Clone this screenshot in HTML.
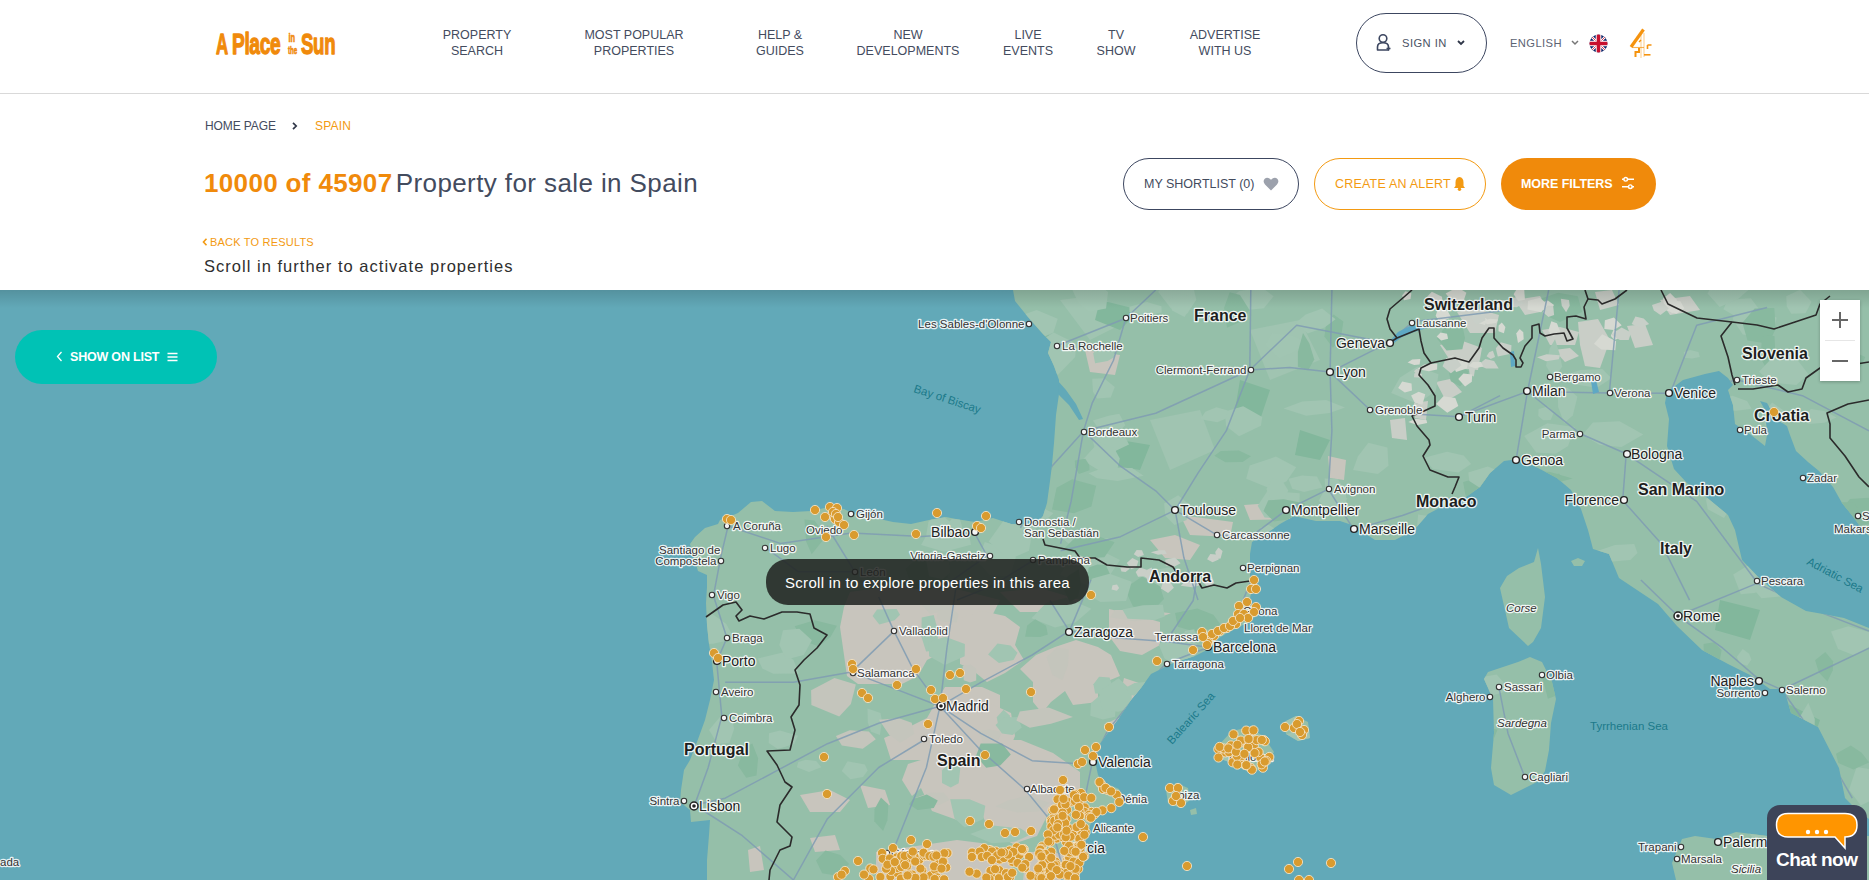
<!DOCTYPE html>
<html><head><meta charset="utf-8">
<style>
*{margin:0;padding:0;box-sizing:border-box}
html,body{width:1869px;height:880px;overflow:hidden;background:#fff;font-family:"Liberation Sans",sans-serif}
.abs{position:absolute;white-space:nowrap}
#hdr{position:absolute;left:0;top:0;width:1869px;height:94px;border-bottom:1px solid #d9d9d9;background:#fff}
.nav{position:absolute;top:27px;font-size:12.5px;line-height:16px;color:#434b5e;text-align:center;white-space:nowrap;transform:translateX(-50%);letter-spacing:0}
.btn{position:absolute;border-radius:30px;white-space:nowrap}
.bt{position:absolute;font-size:12.5px;white-space:nowrap;letter-spacing:0.2px}
#map{position:absolute;left:0;top:290px;width:1869px;height:590px;overflow:hidden;background:#62a9b8}
</style></head><body>
<div id="hdr">
  <svg class="abs" style="left:210px;top:26px" width="135" height="34" viewBox="0 0 135 34"><g fill="#f08a0b" stroke="#f08a0b" stroke-width="1.3" font-family="Liberation Sans, sans-serif" font-weight="bold" stroke-linejoin="round">
<text x="0" y="0" font-size="30" transform="translate(6,28) scale(0.56,1)">A</text>
<text x="0" y="0" font-size="30" transform="translate(22,28) scale(0.64,1)" letter-spacing="-0.6">Place</text>
<text x="0" y="0" font-size="12" transform="translate(78.5,16) scale(0.62,1)" stroke-width="0.6">in</text>
<text x="0" y="0" font-size="11" transform="translate(78,28) scale(0.56,1)" stroke-width="0.6">the</text>
<text x="0" y="0" font-size="30" transform="translate(91,28) scale(0.62,1)" letter-spacing="-0.5">Sun</text>
</g></svg>
  <div class="nav" style="left:477px">PROPERTY<br>SEARCH</div>
  <div class="nav" style="left:634px">MOST POPULAR<br>PROPERTIES</div>
  <div class="nav" style="left:780px">HELP &amp;<br>GUIDES</div>
  <div class="nav" style="left:908px">NEW<br>DEVELOPMENTS</div>
  <div class="nav" style="left:1028px">LIVE<br>EVENTS</div>
  <div class="nav" style="left:1116px">TV<br>SHOW</div>
  <div class="nav" style="left:1225px">ADVERTISE<br>WITH US</div>
  <div class="btn" style="left:1356px;top:13px;width:131px;height:60px;border:1.2px solid #3c4660"></div>
  <svg class="abs" style="left:1375px;top:33px" width="18" height="19" viewBox="0 0 18 19"><circle cx="8" cy="5.5" r="3.8" fill="none" stroke="#3c4660" stroke-width="1.6"/><path d="M2.5 17 V14 Q2.5 9.8 8 9.8 Q13.5 9.8 13.5 14 V17 Z" fill="none" stroke="#3c4660" stroke-width="1.6" stroke-linejoin="round"/><path d="M11.5 15.5 H15.5 M13.5 13.5 V17.5" stroke="#3c4660" stroke-width="1.3"/></svg>
  <div class="bt" style="left:1402px;top:37px;font-size:11.2px;letter-spacing:0.45px;color:#4a5264">SIGN IN</div>
  <svg class="abs" style="left:1457px;top:40px" width="8" height="6" viewBox="0 0 8 6"><path d="M1 1 L4 4 L7 1" fill="none" stroke="#2f3648" stroke-width="1.8"/></svg>
  <div class="bt" style="left:1510px;top:37px;font-size:11.2px;letter-spacing:0.4px;color:#5c6373">ENGLISH</div>
  <svg class="abs" style="left:1571px;top:40px" width="8" height="6" viewBox="0 0 8 6"><path d="M1 1 L4 4 L7 1" fill="none" stroke="#777" stroke-width="1.5"/></svg>
  <svg class="abs" style="left:1589px;top:34px" width="19" height="19" viewBox="0 0 19 19"><defs><clipPath id="fc"><circle cx="9.5" cy="9.5" r="9"/></clipPath></defs><g clip-path="url(#fc)"><rect width="19" height="19" fill="#0b2468"/><path d="M0 0 L19 19 M19 0 L0 19" stroke="#fff" stroke-width="2.4"/><path d="M0 0 L19 19 M19 0 L0 19" stroke="#c8102e" stroke-width="0.8"/><path d="M9.5 0 V19 M0 9.5 H19" stroke="#fff" stroke-width="5.6"/><path d="M9.5 0 V19 M0 9.5 H19" stroke="#c8102e" stroke-width="3.6"/></g></svg>
  <svg class="abs" style="left:1628px;top:28px" width="26" height="32" viewBox="0 0 26 32"><g fill="none" stroke="#f5930f" stroke-linejoin="miter"><path d="M15.5 1.5 L3 19" stroke-width="3.2"/><path d="M4 19.5 H16" stroke-width="1.1" stroke-opacity="0.7"/><path d="M13 4 V30 M16 5 V29" stroke-width="0.9" stroke-opacity="0.55"/><path d="M19.5 17 H23.5 M19.5 17 V21" stroke-width="1.6"/><path d="M7.5 29 V24 H11 V20" stroke-width="2"/><path d="M16 26.8 H22.5" stroke-width="1.6"/><path d="M11 14 L13 12" stroke-width="1.5"/></g></svg>
</div>
<div class="bt" style="left:205px;top:119px;font-size:12px;color:#434b5e;letter-spacing:-0.1px">HOME PAGE</div>
<svg class="abs" style="left:292px;top:122px" width="6" height="8" viewBox="0 0 6 8"><path d="M1 0.8 L4.2 4 L1 7.2" fill="none" stroke="#2f3648" stroke-width="1.7"/></svg>
<div class="bt" style="left:315px;top:119px;font-size:12px;color:#f39a12">SPAIN</div>
<div class="abs" style="left:204px;top:167px;font-size:26px;line-height:32px;color:#434b5e"><b style="color:#f08a0b;letter-spacing:0.35px">10000 of 45907</b> <span style="letter-spacing:0.4px;margin-left:-4px">Property for sale in Spain</span></div>
<div class="btn" style="left:1123px;top:158px;width:176px;height:52px;border:1.2px solid #3c4660"></div>
<div class="bt" style="left:1144px;top:177px;font-size:12.5px;color:#434b5e;letter-spacing:0px">MY SHORTLIST (0)</div>
<svg class="abs" style="left:1263px;top:177px" width="16" height="14" viewBox="0 0 16 14"><path d="M8 13.5 L2 7.5 Q-0.5 4.5 1.5 2 Q4.5 -0.8 8 2.8 Q11.5 -0.8 14.5 2 Q16.5 4.5 14 7.5 Z" fill="#9ca1ac"/></svg>
<div class="btn" style="left:1314px;top:158px;width:172px;height:52px;border:1.2px solid #f39a12"></div>
<div class="bt" style="left:1335px;top:177px;font-size:12.5px;color:#f39a12">CREATE AN ALERT</div>
<svg class="abs" style="left:1453px;top:176px" width="13" height="15" viewBox="0 0 13 15"><path d="M6.5 1 Q10.5 1.5 10.5 6.5 V10 L12 12 H1 L2.5 10 V6.5 Q2.5 1.5 6.5 1 Z" fill="#f39a12"/><circle cx="6.5" cy="13.2" r="1.7" fill="#f39a12"/></svg>
<div class="btn" style="left:1501px;top:158px;width:155px;height:52px;background:#f08a0b"></div>
<div class="bt" style="left:1521px;top:177px;font-size:12.5px;color:#fff;font-weight:bold;letter-spacing:-0.05px">MORE FILTERS</div>
<svg class="abs" style="left:1620px;top:176px" width="16" height="15" viewBox="0 0 16 15"><g fill="none" stroke="#fff" stroke-width="1.4"><path d="M2 3.3 H14 M2 10.7 H14"/><circle cx="5.7" cy="3.3" r="1.8" fill="#f08a0b"/><circle cx="10.3" cy="10.7" r="1.8" fill="#f08a0b"/></g></svg>
<svg class="abs" style="left:202px;top:238px" width="6" height="8" viewBox="0 0 6 8"><path d="M4.5 0.8 L1.5 4 L4.5 7.2" fill="none" stroke="#f39a12" stroke-width="1.6"/></svg>
<div class="bt" style="left:210px;top:236px;font-size:11px;color:#f39a12">BACK TO RESULTS</div>
<div class="abs" style="left:204px;top:257px;font-size:16.5px;letter-spacing:1.02px;color:#2e2e2e">Scroll in further to activate properties</div>
<div id="map"><svg width="1869" height="590" viewBox="0 290 1869 590" style="position:absolute;left:0;top:0">
<defs><linearGradient id="sh" x1="0" y1="0" x2="0" y2="1"><stop offset="0" stop-color="#000" stop-opacity="0.14"/><stop offset="1" stop-color="#000" stop-opacity="0"/></linearGradient></defs>
<rect x="0" y="290" width="1869" height="590" fill="#62a9b8"/>
<polygon points="1013,290 1015,301 1028,317 1035,325 1043,334 1051,342 1048,353 1054,366 1059,380 1059,394 1056,415 1054,443 1052,465 1050,481 1047,503 1043,516 1037,523 1029,525 1011,524 993,518 975,522 956,519 946,517 929,520 911,524 893,522 875,518 856,515 844,509 829,507 811,511 793,512 775,511 762,501 751,502 738,513 731,516 720,520 718,524 705,528 695,537 690,544 691,548 698,571 707,575 707,587 706,603 707,625 709,644 712,662 714,680 710,700 705,720 697,742 690,760 684,770 681,790 680,802 690,810 691,822 710,820 709,835 707,860 707,880 1060,880 1079,868 1084,861 1086,837 1091,823 1105,811 1122,799 1119,789 1103,782 1098,775 1095,761 1100,744 1107,734 1119,718 1131,700 1141,688 1151,674 1173,663 1195,656 1209,649 1216,640 1227,633 1245,624 1255,617 1250,599 1252,585 1250,576 1250,554 1252,542 1264,535 1280,524 1294,516 1316,521 1340,521 1352,525 1375,540 1395,540 1414,530 1428,514 1447,504 1466,497 1480,487 1490,473 1504,461 1519,459 1538,468 1557,478 1571,490 1581,509 1588,530 1593,549 1609,554 1619,578 1640,592 1658,604 1677,626 1702,650 1728,664 1750,675 1770,689 1784,689 1791,713 1818,727 1839,768 1845,798 1859,812 1869,819 1869,628 1844,618 1823,614 1806,611 1781,597 1760,579 1742,560 1735,530 1728,515 1705,496 1687,483 1674,469 1667,446 1669,419 1665,403 1667,392 1683,380 1705,374 1719,371 1728,378 1733,385 1728,390 1733,405 1735,424 1751,435 1765,446 1767,435 1765,410 1760,401 1767,403 1776,419 1787,426 1790,435 1796,451 1808,462 1819,471 1833,487 1842,503 1851,514 1860,526 1869,536 1869,290" fill="#95bfa9"/>
<polygon points="1538,548 1541,564 1545,597 1541,628 1533,642 1528,646 1509,628 1500,588 1507,576 1519,568 1534,562" fill="#95bfa9"/>
<polygon points="1530,657 1542,662 1552,682 1556,699 1551,723 1549,750 1545,771 1539,781 1511,795 1494,785 1491,768 1494,733 1493,699 1484,679 1488,672 1518,662" fill="#95bfa9"/>
<polygon points="1216,748 1232,731 1250,727 1264,737 1274,752 1264,768 1250,773 1232,763 1218,758" fill="#95bfa9"/>
<polygon points="1284,722 1296,716 1308,722 1310,738 1298,741 1286,734" fill="#95bfa9"/>
<polygon points="1166,790 1176,783 1188,788 1190,800 1180,808 1168,803" fill="#95bfa9"/>
<polygon points="1672,863 1682,839 1695,836 1716,839 1736,832 1767,836 1869,836 1869,880 1676,880" fill="#95bfa9"/>
<polygon points="1571,561 1578,558 1585,561 1582,566 1574,566" fill="#95bfa9"/>
<polygon points="1190,810 1196,808 1197,814 1191,815" fill="#95bfa9"/>
<clipPath id="lc"><polygon points="1013,290 1015,301 1028,317 1035,325 1043,334 1051,342 1048,353 1054,366 1059,380 1059,394 1056,415 1054,443 1052,465 1050,481 1047,503 1043,516 1037,523 1029,525 1011,524 993,518 975,522 956,519 946,517 929,520 911,524 893,522 875,518 856,515 844,509 829,507 811,511 793,512 775,511 762,501 751,502 738,513 731,516 720,520 718,524 705,528 695,537 690,544 691,548 698,571 707,575 707,587 706,603 707,625 709,644 712,662 714,680 710,700 705,720 697,742 690,760 684,770 681,790 680,802 690,810 691,822 710,820 709,835 707,860 707,880 1060,880 1079,868 1084,861 1086,837 1091,823 1105,811 1122,799 1119,789 1103,782 1098,775 1095,761 1100,744 1107,734 1119,718 1131,700 1141,688 1151,674 1173,663 1195,656 1209,649 1216,640 1227,633 1245,624 1255,617 1250,599 1252,585 1250,576 1250,554 1252,542 1264,535 1280,524 1294,516 1316,521 1340,521 1352,525 1375,540 1395,540 1414,530 1428,514 1447,504 1466,497 1480,487 1490,473 1504,461 1519,459 1538,468 1557,478 1571,490 1581,509 1588,530 1593,549 1609,554 1619,578 1640,592 1658,604 1677,626 1702,650 1728,664 1750,675 1770,689 1784,689 1791,713 1818,727 1839,768 1845,798 1859,812 1869,819 1869,628 1844,618 1823,614 1806,611 1781,597 1760,579 1742,560 1735,530 1728,515 1705,496 1687,483 1674,469 1667,446 1669,419 1665,403 1667,392 1683,380 1705,374 1719,371 1728,378 1733,385 1728,390 1733,405 1735,424 1751,435 1765,446 1767,435 1765,410 1760,401 1767,403 1776,419 1787,426 1790,435 1796,451 1808,462 1819,471 1833,487 1842,503 1851,514 1860,526 1869,536 1869,290"/><polygon points="1538,548 1541,564 1545,597 1541,628 1533,642 1528,646 1509,628 1500,588 1507,576 1519,568 1534,562"/><polygon points="1530,657 1542,662 1552,682 1556,699 1551,723 1549,750 1545,771 1539,781 1511,795 1494,785 1491,768 1494,733 1493,699 1484,679 1488,672 1518,662"/><polygon points="1216,748 1232,731 1250,727 1264,737 1274,752 1264,768 1250,773 1232,763 1218,758"/><polygon points="1284,722 1296,716 1308,722 1310,738 1298,741 1286,734"/><polygon points="1166,790 1176,783 1188,788 1190,800 1180,808 1168,803"/><polygon points="1672,863 1682,839 1695,836 1716,839 1736,832 1767,836 1869,836 1869,880 1676,880"/></clipPath><g clip-path="url(#lc)">
<polygon points="850,592 900,585 960,590 1000,600 982,636 1000,640 1000,660 982,664 964,655 945,651 927,660 918,676 902,684 873,684 858,684 847,676 844,655 840,627 844,607" fill="#c8c5bd"/>
<polygon points="945,687 982,687 1000,695 1000,760 891,760 884,738 909,727 927,718 936,702" fill="#c8c5bd"/>
<polygon points="960,618 982,611 1005,616 1020,627 1015,645 1024,660 1005,673 987,682 971,669 960,664" fill="#c8c5bd"/>
<polygon points="1020,669 1036,655 1055,647 1076,640 1098,647 1111,655 1120,676 1098,685 1098,702 1073,705 1065,691 1051,702 1042,713 1033,702 1033,682" fill="#c8c5bd"/>
<polygon points="1109,609 1135,615 1160,622 1160,645 1142,655 1120,651 1109,636" fill="#c8c5bd"/>
<polygon points="960,709 987,702 1011,713 1015,736 1005,760 960,760" fill="#c8c5bd"/>
<polygon points="1124,678 1142,684 1133,702 1120,696" fill="#c8c5bd"/>
<polygon points="905,740 1021,740 1053,753 1080,772 1080,793 1053,804 1037,836 1013,844 989,830 981,812 957,820 932,811 921,788 912,796 902,780 908,764 924,759" fill="#c8c5bd"/>
<polygon points="800,795 830,790 850,800 840,812 810,812" fill="#c8c5bd"/>
<polygon points="860,785 885,790 890,805 868,808" fill="#c8c5bd"/>
<polygon points="876,852 957,840 981,843 1005,852 1053,852 1080,860 1080,880 876,880" fill="#c8c5bd"/>
<polygon points="1000,592 1040,588 1080,600 1060,612 1020,612" fill="#c8c5bd"/>
<polygon points="810,838 835,835 840,850 815,852" fill="#c8c5bd"/>
<polygon points="748,850 760,846 764,870 750,872" fill="#c8c5bd"/>
<polygon points="1150,540 1175,535 1200,545 1190,560 1165,558" fill="#c8c5bd"/>
<polygon points="1180,515 1233,522 1230,537 1190,535" fill="#c8c5bd"/>
<polygon points="1244,505 1297,501 1290,519 1250,520" fill="#c8c5bd"/>
<polygon points="1085,350 1120,355 1115,375 1090,372" fill="#c8c5bd"/>
<polygon points="1328,456 1346,460 1344,480 1330,478" fill="#c8c5bd"/>
<polygon points="1457,312 1475,308 1499,315 1495,333 1470,333" fill="#c9cec7"/>
<polygon points="1440,345 1460,340 1482,348 1478,370 1455,368" fill="#c9cec7"/>
<polygon points="1542,330 1560,327 1579,332 1575,345 1550,345" fill="#c9cec7"/>
<polygon points="1554,350 1570,348 1579,356 1565,362" fill="#c9cec7"/>
<polygon points="1578,322 1598,319 1610,340 1600,368 1585,366 1580,345" fill="#c9cec7"/>
<polygon points="1627,326 1645,324 1653,345 1635,348" fill="#c9cec7"/>
<polygon points="1595,292 1612,290 1619,305 1600,310" fill="#c9cec7"/>
<polygon points="1436,382 1450,379 1462,392 1446,401" fill="#c9cec7"/>
<polygon points="1414,403 1428,401 1426,420 1415,418" fill="#c9cec7"/>
<polygon points="1390,420 1405,418 1407,440 1392,438" fill="#c9cec7"/>
<polygon points="1515,300 1540,296 1550,310 1525,315" fill="#c9cec7"/>
<polygon points="1660,300 1690,296 1700,310 1670,315" fill="#c9cec7"/>
<polygon points="1060,300 1100,295 1130,320 1090,340" fill="#a0c4b1"/>
<polygon points="1150,420 1200,410 1215,450 1170,470" fill="#a0c4b1"/>
<polygon points="1250,330 1300,320 1320,360 1270,380" fill="#a0c4b1"/>
<polygon points="1080,540 1120,560 1100,590 1060,575" fill="#a0c4b1"/>
<polygon points="1600,560 1640,600 1660,640 1630,640 1605,600" fill="#a0c4b1"/>
<polygon points="1100,300 1140,310 1120,330 1095,320" fill="#82b79c"/>
<polygon points="1240,380 1270,390 1260,420 1235,410" fill="#82b79c"/>
<polygon points="1300,430 1330,440 1320,460 1295,455" fill="#82b79c"/>
<polygon points="1120,440 1150,445 1140,470 1110,465" fill="#82b79c"/>
<polygon points="1720,600 1760,610 1750,640 1715,630" fill="#82b79c"/>
<polygon points="1780,700 1820,720 1810,750 1775,730" fill="#82b79c"/>
<polygon points="1177.8,626.7 1175.1,613.0 1197.3,608.6 1213.4,614.8 1222.7,627.6 1194.2,631.5" fill="#88b99f"/>
<polygon points="1210.3,729.5 1203.6,742.1 1185.0,737.4 1181.0,723.6 1191.2,716.8 1206.3,714.1" fill="#88b99f"/>
<polygon points="1156.5,618.4 1134.0,621.3 1110.0,617.2 1114.8,609.9 1143.3,610.0 1170.9,613.2" fill="#c4c5bc"/>
<polygon points="1849.0,534.1 1841.3,540.6 1838.5,526.9 1840.7,516.8 1848.2,513.7 1853.7,521.7" fill="#88b99f"/>
<polygon points="867.8,722.4 867.5,708.6 880.5,713.0 882.1,721.2 879.9,734.9 871.1,731.7" fill="#a1c5b2"/>
<polygon points="1196.3,299.8 1187.3,313.4 1170.6,307.9 1158.1,291.7 1176.8,275.0 1193.1,285.9" fill="#a1c5b2"/>
<polygon points="1751.5,780.9 1745.3,773.5 1751.2,768.0 1760.0,765.0 1766.5,771.4 1763.2,778.7" fill="#88b99f"/>
<polygon points="1767.9,587.7 1754.4,593.0 1740.8,594.2 1733.2,574.5 1749.9,564.2 1761.7,570.0" fill="#a1c5b2"/>
<polygon points="1282.7,864.6 1287.3,859.4 1295.4,859.6 1304.1,863.6 1299.1,868.3 1288.2,870.7" fill="#a1c5b2"/>
<polygon points="1545.4,485.8 1519.3,482.1 1502.7,477.5 1529.9,472.3 1549.2,471.7 1572.6,478.6" fill="#88b99f"/>
<polygon points="1249.5,309.8 1227.9,301.0 1239.2,290.9 1262.3,287.8 1273.6,296.2 1263.9,308.2" fill="#a1c5b2"/>
<polygon points="695.2,648.1 679.4,655.6 664.9,649.0 659.8,641.7 673.3,637.1 693.2,639.2" fill="#88b99f"/>
<polygon points="926.3,534.5 928.4,522.0 938.5,511.2 950.7,522.7 949.2,536.5 935.4,542.7" fill="#a1c5b2"/>
<polygon points="969.1,431.5 961.5,416.1 969.1,405.6 986.7,402.5 991.3,416.5 986.4,429.4" fill="#a1c5b2"/>
<polygon points="1433.9,536.9 1425.2,544.6 1416.4,534.5 1418.1,514.5 1430.5,516.2 1438.1,525.2" fill="#a1c5b2"/>
<polygon points="636.4,575.2 633.2,565.0 650.4,558.9 671.8,564.4 672.1,572.1 656.6,576.2" fill="#a1c5b2"/>
<polygon points="874.3,821.3 874.5,809.3 881.0,797.5 888.4,804.4 887.4,820.2 883.1,831.0" fill="#88b99f"/>
<polygon points="1304.4,772.4 1292.4,774.9 1286.5,756.0 1292.4,744.9 1308.7,744.4 1312.0,757.6" fill="#a1c5b2"/>
<polygon points="800.0,390.8 790.1,376.9 806.5,363.2 821.1,362.6 831.7,378.8 822.1,392.5" fill="#88b99f"/>
<polygon points="1033.6,530.4 1014.6,531.6 1000.7,516.2 1013.8,501.1 1033.4,503.3 1053.5,513.2" fill="#a1c5b2"/>
<polygon points="1857.5,371.2 1849.3,365.9 1847.7,359.3 1854.5,352.0 1865.2,357.1 1862.1,364.8" fill="#88b99f"/>
<polygon points="690.3,456.1 674.6,461.1 655.5,449.6 656.2,435.2 678.0,427.4 691.4,435.1" fill="#a1c5b2"/>
<polygon points="1174.5,524.9 1165.3,515.8 1164.1,503.4 1178.2,495.2 1192.1,507.1 1186.5,520.0" fill="#a1c5b2"/>
<polygon points="1751.7,408.7 1736.6,410.8 1712.2,409.4 1710.0,402.4 1732.4,395.7 1747.0,401.0" fill="#a1c5b2"/>
<polygon points="1469.0,836.3 1446.6,828.6 1463.4,823.8 1491.3,820.8 1512.0,827.0 1490.9,832.0" fill="#88b99f"/>
<polygon points="868.3,386.1 856.9,395.9 843.8,394.7 840.0,380.1 849.2,367.0 862.4,374.3" fill="#88b99f"/>
<polygon points="1215.3,728.3 1200.4,736.0 1184.0,733.3 1179.1,723.7 1195.2,717.8 1207.9,719.6" fill="#a1c5b2"/>
<polygon points="1001.3,361.8 985.6,365.9 969.6,362.2 967.7,354.9 981.5,353.0 1005.8,352.6" fill="#a1c5b2"/>
<polygon points="1756.2,336.8 1742.8,334.6 1732.6,319.0 1742.4,299.5 1757.9,308.0 1763.0,319.5" fill="#a1c5b2"/>
<polygon points="962.3,527.2 958.9,534.4 951.3,534.0 945.3,526.7 951.7,519.0 959.9,519.2" fill="#a1c5b2"/>
<polygon points="1790.3,523.1 1793.7,511.9 1815.6,507.8 1834.4,513.1 1835.3,523.2 1811.8,530.1" fill="#a1c5b2"/>
<polygon points="1582.2,311.9 1559.9,322.0 1545.6,315.5 1533.3,301.2 1558.1,292.7 1577.8,296.2" fill="#88b99f"/>
<polygon points="918.3,601.1 928.6,586.9 946.9,580.7 962.6,597.2 953.7,608.3 930.1,614.3" fill="#c4c5bc"/>
<polygon points="1409.6,694.4 1419.4,676.5 1432.3,676.1 1439.0,690.3 1436.2,705.5 1420.5,708.7" fill="#a1c5b2"/>
<polygon points="1558.1,407.1 1557.8,390.6 1567.7,387.8 1577.4,396.8 1572.8,415.4 1564.1,423.0" fill="#a1c5b2"/>
<polygon points="1111.6,577.4 1099.8,584.8 1087.4,579.5 1088.6,567.4 1097.5,564.5 1105.7,564.9" fill="#88b99f"/>
<polygon points="1377.9,473.9 1353.0,470.1 1357.9,456.4 1368.3,442.7 1387.4,447.6 1388.5,465.7" fill="#a1c5b2"/>
<polygon points="1462.3,349.2 1446.6,350.5 1436.9,338.5 1447.2,323.8 1461.8,322.6 1465.0,337.9" fill="#88b99f"/>
<polygon points="1850.5,566.1 1851.7,548.9 1861.7,542.8 1868.3,553.8 1870.1,573.4 1856.9,580.2" fill="#88b99f"/>
<polygon points="875.8,739.3 862.7,748.7 841.9,745.4 835.9,736.0 849.7,730.2 868.8,731.5" fill="#c4c5bc"/>
<polygon points="677.2,689.7 669.6,695.2 663.7,679.8 663.3,662.3 674.1,658.5 682.0,670.3" fill="#a1c5b2"/>
<polygon points="1740.9,543.1 1736.6,525.3 1762.4,515.2 1787.7,524.1 1784.7,537.1 1766.9,552.1" fill="#a1c5b2"/>
<polygon points="1110.7,397.5 1097.2,398.4 1093.0,391.7 1092.2,378.7 1104.0,378.2 1114.8,387.0" fill="#a1c5b2"/>
<polygon points="878.4,512.6 867.2,504.5 867.8,493.0 888.6,485.7 901.0,499.3 899.1,515.1" fill="#a1c5b2"/>
<polygon points="1075.8,622.3 1055.0,627.5 1031.5,618.2 1046.1,602.9 1065.6,597.7 1091.4,608.7" fill="#a1c5b2"/>
<polygon points="971.0,544.7 944.3,551.8 921.1,545.1 927.5,533.4 941.7,529.5 969.0,533.8" fill="#a1c5b2"/>
<polygon points="789.8,510.0 778.0,496.4 792.2,488.2 806.6,485.5 820.8,498.6 803.5,508.6" fill="#a1c5b2"/>
<polygon points="1269.6,850.8 1255.8,857.1 1226.9,853.8 1223.6,846.2 1237.7,836.8 1267.4,843.6" fill="#a1c5b2"/>
<polygon points="1090.3,715.7 1091.0,703.1 1104.4,691.5 1116.0,701.2 1115.0,716.7 1102.9,719.6" fill="#a1c5b2"/>
<polygon points="1095.1,363.3 1093.2,353.4 1099.5,344.8 1112.6,349.0 1115.0,356.7 1107.6,361.0" fill="#a1c5b2"/>
<polygon points="924.1,395.4 914.6,390.4 911.1,382.4 913.9,370.0 923.9,371.6 928.9,382.9" fill="#a1c5b2"/>
<polygon points="1621.5,446.9 1599.7,445.0 1582.5,434.7 1592.9,422.5 1619.6,421.2 1643.3,434.5" fill="#a1c5b2"/>
<polygon points="1061.9,585.4 1068.0,576.0 1078.8,569.1 1080.9,585.1 1078.1,597.3 1069.7,602.3" fill="#88b99f"/>
<polygon points="964.8,827.4 954.5,818.6 950.2,799.2 969.5,799.2 985.3,805.8 983.3,819.0" fill="#a1c5b2"/>
<polygon points="1346.4,795.8 1333.9,791.1 1337.3,774.4 1343.0,763.4 1354.1,771.1 1356.8,783.9" fill="#a1c5b2"/>
<polygon points="1161.6,312.6 1146.0,315.8 1129.4,311.9 1129.5,306.7 1146.9,301.9 1161.5,306.3" fill="#a1c5b2"/>
<polygon points="1386.3,703.8 1387.5,684.0 1409.5,684.8 1433.6,691.8 1423.9,706.6 1404.0,717.0" fill="#a1c5b2"/>
<polygon points="1013.5,659.9 998.9,663.0 988.1,654.5 997.5,643.6 1010.6,645.5 1017.5,652.7" fill="#a1c5b2"/>
<polygon points="940.3,348.8 918.3,347.5 906.1,328.8 922.6,312.5 941.2,310.9 956.2,332.4" fill="#88b99f"/>
<polygon points="997.9,723.5 996.7,717.2 1003.6,709.7 1009.5,715.3 1012.8,724.3 1004.3,726.0" fill="#a1c5b2"/>
<polygon points="1030.2,834.8 1014.8,841.8 991.8,843.3 970.1,833.9 993.1,825.5 1020.7,828.5" fill="#a1c5b2"/>
<polygon points="1159.5,831.6 1149.4,824.0 1145.3,803.0 1153.0,792.6 1164.9,792.2 1170.2,812.2" fill="#a1c5b2"/>
<polygon points="1291.6,870.9 1262.9,873.7 1249.1,868.0 1262.8,860.0 1281.3,860.2 1303.6,865.5" fill="#a1c5b2"/>
<polygon points="983.1,743.2 978.4,731.3 988.7,729.6 1002.5,731.8 998.4,740.1 992.5,744.1" fill="#c4c5bc"/>
<polygon points="1227.0,327.7 1224.1,307.7 1229.7,292.3 1240.0,294.9 1249.5,310.0 1241.2,321.6" fill="#88b99f"/>
<polygon points="1260.9,425.8 1239.1,436.2 1226.0,425.9 1225.0,411.5 1243.2,406.2 1262.3,417.1" fill="#a1c5b2"/>
<polygon points="791.6,403.3 777.4,406.9 759.9,399.3 768.2,385.3 783.7,378.9 795.3,391.7" fill="#88b99f"/>
<polygon points="839.2,716.4 811.4,704.9 811.1,690.2 834.5,678.1 855.8,684.5 850.9,703.9" fill="#c4c5bc"/>
<polygon points="1265.6,345.2 1272.1,333.2 1292.5,335.7 1308.4,342.9 1293.5,352.1 1279.3,358.3" fill="#a1c5b2"/>
<polygon points="1767.2,431.8 1761.8,414.9 1772.1,402.4 1783.6,410.6 1783.9,420.9 1777.5,429.8" fill="#a1c5b2"/>
<polygon points="1616.4,775.2 1596.9,771.8 1596.0,760.8 1613.4,756.5 1630.2,758.5 1627.9,767.6" fill="#88b99f"/>
<polygon points="872.3,453.1 861.0,466.6 853.1,450.3 849.5,436.0 866.9,422.1 877.3,436.5" fill="#88b99f"/>
<polygon points="1115.4,451.1 1096.4,453.3 1092.1,438.7 1101.1,426.6 1120.9,428.3 1129.0,444.5" fill="#a1c5b2"/>
<polygon points="1460.1,386.3 1450.8,381.2 1449.1,373.2 1457.4,365.4 1468.9,371.0 1465.8,380.8" fill="#88b99f"/>
<polygon points="1547.9,698.8 1542.6,678.6 1549.1,668.1 1557.7,666.0 1559.2,680.8 1556.5,695.5" fill="#88b99f"/>
<polygon points="991.7,394.6 974.3,396.6 965.7,382.9 978.1,370.1 991.1,370.5 1003.1,384.1" fill="#a1c5b2"/>
<polygon points="1766.5,839.3 1754.4,835.2 1747.0,829.4 1751.6,817.7 1764.4,817.5 1769.6,827.3" fill="#88b99f"/>
<polygon points="1734.4,315.7 1723.4,309.2 1727.7,299.8 1750.9,298.3 1757.8,307.5 1756.1,314.2" fill="#a1c5b2"/>
<polygon points="1090.9,873.1 1080.7,871.8 1073.1,869.9 1073.7,862.7 1085.0,856.3 1093.7,863.0" fill="#c4c5bc"/>
<polygon points="959.6,369.5 955.4,350.1 961.1,336.0 969.1,338.6 971.0,353.1 967.8,364.0" fill="#a1c5b2"/>
<polygon points="933.2,487.6 935.8,474.9 948.2,469.0 957.5,478.4 955.5,489.1 944.9,493.1" fill="#a1c5b2"/>
<polygon points="1116.8,732.6 1104.1,724.6 1119.1,717.5 1140.8,718.3 1150.8,728.0 1137.5,732.6" fill="#c4c5bc"/>
<polygon points="1095.2,693.4 1093.4,684.3 1099.1,676.8 1109.5,677.5 1112.2,685.4 1109.9,694.0" fill="#a1c5b2"/>
<polygon points="884.4,515.3 869.5,513.8 862.6,500.5 867.0,487.8 886.3,484.4 899.2,500.1" fill="#a1c5b2"/>
<polygon points="1102.3,710.2 1099.0,691.4 1118.5,678.2 1131.7,690.6 1131.8,707.4 1118.5,711.7" fill="#a1c5b2"/>
<polygon points="894.6,620.3 879.3,624.5 872.6,616.1 877.0,609.5 896.7,609.0 900.0,614.8" fill="#a1c5b2"/>
<polygon points="1435.1,658.0 1439.8,644.9 1451.5,644.7 1456.8,657.3 1453.3,676.5 1442.0,674.3" fill="#a1c5b2"/>
<polygon points="667.5,419.3 644.9,418.6 626.7,415.3 631.7,409.1 663.1,408.7 684.3,412.9" fill="#88b99f"/>
<polygon points="1747.2,665.7 1739.2,663.2 1736.9,656.8 1742.7,649.1 1749.1,653.8 1751.4,659.5" fill="#a1c5b2"/>
<polygon points="914.3,734.1 900.2,742.7 889.0,734.4 879.0,719.7 899.0,718.2 911.7,722.8" fill="#c4c5bc"/>
<polygon points="1364.0,646.9 1349.8,635.9 1353.1,623.7 1363.9,617.0 1375.9,627.4 1377.5,638.2" fill="#a1c5b2"/>
<polygon points="1740.7,327.2 1742.9,318.3 1761.4,311.0 1776.6,317.6 1774.9,328.0 1758.6,333.7" fill="#a1c5b2"/>
<polygon points="1347.4,601.9 1341.4,607.8 1337.1,595.9 1338.6,585.1 1346.7,580.1 1349.4,591.1" fill="#a1c5b2"/>
<polygon points="1559.6,823.1 1558.8,816.9 1564.2,813.1 1570.4,815.0 1574.1,822.2 1566.3,824.9" fill="#88b99f"/>
<polygon points="1159.2,587.2 1144.2,582.2 1139.7,571.9 1169.2,567.5 1194.1,576.2 1182.9,582.7" fill="#a1c5b2"/>
<polygon points="692.1,505.6 666.0,506.1 661.9,490.8 678.2,476.9 700.3,477.9 716.1,498.7" fill="#a1c5b2"/>
<polygon points="1836.6,515.3 1850.0,499.1 1868.4,497.8 1878.1,510.9 1874.7,523.8 1853.4,525.8" fill="#88b99f"/>
<polygon points="643.1,338.2 640.9,326.1 647.5,317.6 656.3,322.9 657.7,335.8 652.0,346.1" fill="#a1c5b2"/>
<polygon points="771.9,383.6 761.8,362.0 772.1,346.4 793.6,347.3 805.5,363.2 799.6,377.2" fill="#a1c5b2"/>
<polygon points="1489.7,696.6 1484.0,688.4 1483.7,676.8 1496.6,674.5 1505.4,684.4 1503.9,692.1" fill="#a1c5b2"/>
<polygon points="669.1,650.4 660.8,638.2 666.9,619.5 684.7,624.4 691.5,638.3 687.2,652.2" fill="#a1c5b2"/>
<polygon points="1308.1,370.2 1297.9,366.7 1297.9,351.7 1303.0,333.0 1309.4,343.5 1314.3,359.4" fill="#88b99f"/>
<polygon points="1555.7,453.7 1536.2,452.5 1524.2,435.9 1547.4,423.3 1574.7,426.9 1568.1,446.0" fill="#a1c5b2"/>
<polygon points="1332.8,347.7 1324.4,336.5 1326.1,323.5 1333.6,314.5 1343.4,321.4 1340.6,339.8" fill="#88b99f"/>
<polygon points="822.2,873.2 816.0,860.6 825.5,850.4 840.3,854.9 849.1,864.0 836.8,875.8" fill="#88b99f"/>
<polygon points="1326.0,741.9 1315.5,749.3 1292.0,748.6 1280.1,736.4 1301.1,729.3 1327.5,732.5" fill="#a1c5b2"/>
<polygon points="1012.7,735.1 1002.1,733.4 995.5,724.9 1003.9,717.4 1017.3,716.9 1021.8,727.4" fill="#a1c5b2"/>
<polygon points="1088.6,859.4 1069.2,863.5 1066.4,847.9 1077.3,840.3 1094.8,841.0 1096.9,854.0" fill="#c4c5bc"/>
<polygon points="1271.6,743.1 1265.6,736.2 1270.2,729.6 1276.1,728.7 1280.9,733.4 1278.3,738.4" fill="#a1c5b2"/>
<polygon points="845.3,461.5 837.6,478.6 826.2,478.4 816.8,455.3 828.5,437.1 839.1,441.1" fill="#a1c5b2"/>
<polygon points="1845.3,847.2 1839.3,829.7 1845.2,812.1 1854.4,813.9 1860.3,831.7 1853.7,847.9" fill="#a1c5b2"/>
<polygon points="1487.6,527.7 1489.1,511.3 1508.3,506.6 1523.9,521.9 1517.8,534.1 1497.6,542.6" fill="#a1c5b2"/>
<polygon points="1243.8,716.2 1234.4,700.9 1232.6,685.4 1248.8,677.1 1262.2,691.0 1258.9,707.0" fill="#a1c5b2"/>
<polygon points="1577.3,384.8 1563.1,376.1 1580.1,370.1 1602.3,368.9 1611.5,378.2 1596.9,387.7" fill="#a1c5b2"/>
<polygon points="1853.8,834.4 1838.2,836.2 1819.9,831.7 1828.7,819.9 1840.2,814.7 1858.3,821.7" fill="#a1c5b2"/>
<polygon points="1005.2,446.9 1003.5,432.4 1007.4,418.7 1017.6,425.1 1023.4,441.0 1014.7,458.6" fill="#88b99f"/>
<polygon points="1840.7,362.2 1834.8,355.1 1842.0,347.0 1856.1,349.9 1860.1,355.2 1854.2,360.3" fill="#a1c5b2"/>
<polygon points="737.9,765.6 744.6,747.2 752.3,743.5 758.1,758.2 756.5,775.4 746.2,777.8" fill="#88b99f"/>
<polygon points="1332.1,517.3 1325.8,499.4 1324.6,478.6 1337.8,478.9 1345.8,491.6 1346.8,510.3" fill="#a1c5b2"/>
<polygon points="811.7,554.3 806.2,541.8 804.4,519.5 814.6,520.5 820.0,528.3 821.9,541.5" fill="#88b99f"/>
<polygon points="1800.2,840.8 1789.2,840.7 1783.7,820.0 1789.5,809.3 1799.7,803.4 1805.3,820.3" fill="#a1c5b2"/>
<polygon points="1400.8,844.4 1395.7,852.6 1388.3,847.2 1384.6,835.3 1391.7,826.5 1398.5,833.0" fill="#a1c5b2"/>
<polygon points="1824.3,422.7 1808.6,423.9 1801.7,417.5 1811.0,409.1 1825.0,411.3 1836.5,417.6" fill="#a1c5b2"/>
<polygon points="839.9,449.3 823.3,457.0 808.7,444.6 812.1,433.0 825.3,420.2 836.3,434.3" fill="#a1c5b2"/>
<polygon points="959.8,355.2 941.6,355.9 919.9,350.6 929.8,338.6 948.6,329.8 962.0,339.3" fill="#a1c5b2"/>
<polygon points="1082.3,460.3 1098.9,442.1 1114.1,448.1 1119.8,458.4 1117.1,470.2 1099.3,470.4" fill="#a1c5b2"/>
<polygon points="821.3,767.2 809.0,771.9 796.8,767.3 798.3,762.0 805.8,759.8 816.2,761.0" fill="#a1c5b2"/>
<polygon points="699.6,478.0 688.8,473.8 694.0,466.7 701.0,461.9 713.3,467.0 710.6,474.3" fill="#88b99f"/>
<polygon points="1827.4,681.6 1818.9,672.5 1815.1,660.2 1825.3,652.1 1833.0,661.3 1832.8,670.3" fill="#88b99f"/>
<polygon points="1543.2,420.3 1538.3,416.0 1538.6,409.0 1548.2,406.5 1553.4,413.6 1550.7,420.0" fill="#a1c5b2"/>
<polygon points="818.7,646.5 803.9,640.8 794.6,626.2 814.7,620.2 836.9,625.8 830.5,637.0" fill="#88b99f"/>
<polygon points="926.1,651.5 921.3,636.6 921.7,617.4 933.7,615.1 938.5,632.4 936.4,650.5" fill="#a1c5b2"/>
<polygon points="692.4,479.1 700.9,472.4 716.1,471.5 733.0,478.0 723.9,483.6 701.4,484.4" fill="#a1c5b2"/>
<polygon points="1802.4,586.7 1790.7,584.8 1785.1,572.6 1802.7,568.3 1820.0,573.6 1819.9,584.9" fill="#88b99f"/>
<polygon points="850.4,779.3 841.8,770.9 847.6,761.2 864.8,764.6 867.7,770.5 863.0,777.0" fill="#a1c5b2"/>
<polygon points="1403.3,751.4 1392.1,765.4 1378.4,759.0 1378.2,739.4 1388.4,731.8 1399.2,738.6" fill="#88b99f"/>
<polygon points="661.9,391.2 646.5,386.3 651.9,380.4 675.2,375.4 684.8,383.8 678.2,389.6" fill="#88b99f"/>
<polygon points="1300.5,643.2 1288.3,639.8 1278.5,632.6 1288.4,620.4 1300.4,624.2 1308.8,632.6" fill="#a1c5b2"/>
<polygon points="1033.3,335.9 1037.0,323.6 1043.3,317.9 1047.9,327.0 1049.2,336.9 1041.8,343.9" fill="#88b99f"/>
<polygon points="1750.0,585.1 1760.9,576.6 1786.2,572.5 1798.5,584.9 1791.6,595.5 1761.4,598.3" fill="#a1c5b2"/>
<polygon points="1518.4,564.4 1506.3,564.0 1493.7,562.6 1491.5,554.1 1509.0,551.2 1519.5,555.9" fill="#a1c5b2"/>
<polygon points="949.7,800.1 938.7,805.2 925.3,803.1 915.3,798.0 929.7,792.8 943.5,792.6" fill="#c4c5bc"/>
<polygon points="784.2,491.1 778.5,472.9 781.3,459.0 789.6,450.2 796.3,464.7 794.1,477.9" fill="#88b99f"/>
<polygon points="1704.3,662.4 1703.5,644.0 1713.9,642.2 1721.6,650.1 1718.4,668.4 1710.7,674.5" fill="#88b99f"/>
<polygon points="1458.7,554.4 1440.8,549.0 1446.8,540.6 1464.0,537.5 1477.0,543.6 1483.3,550.9" fill="#a1c5b2"/>
<polygon points="1768.4,343.8 1747.5,340.5 1742.4,322.7 1754.6,308.4 1774.3,307.9 1775.7,329.0" fill="#88b99f"/>
<polygon points="1016.4,720.5 1019.8,711.4 1048.6,707.6 1072.9,717.1 1051.0,723.8 1029.8,727.7" fill="#c4c5bc"/>
<polygon points="1191.2,306.4 1184.5,316.9 1172.1,310.5 1168.9,300.5 1177.8,293.1 1190.2,296.8" fill="#a1c5b2"/>
<polygon points="995.4,806.6 1007.6,800.6 1026.7,795.6 1049.7,802.7 1038.8,811.6 1016.8,812.5" fill="#c4c5bc"/>
<polygon points="1642.7,839.5 1617.8,836.9 1619.0,819.4 1632.7,811.9 1661.2,814.6 1659.0,828.5" fill="#a1c5b2"/>
<polygon points="1651.2,838.8 1639.4,831.9 1643.8,825.9 1663.8,821.8 1682.1,828.3 1673.2,836.7" fill="#a1c5b2"/>
<polygon points="1791.3,313.8 1786.8,306.4 1786.2,296.3 1800.1,289.7 1811.6,301.8 1805.5,313.3" fill="#a1c5b2"/>
<polygon points="1335.6,506.6 1324.4,506.4 1318.7,500.7 1323.7,491.8 1334.5,491.5 1347.7,498.8" fill="#a1c5b2"/>
<polygon points="1630.3,559.9 1609.8,561.8 1597.1,551.1 1615.0,545.1 1634.2,544.1 1637.5,552.9" fill="#a1c5b2"/>
<polygon points="1264.6,517.6 1257.7,505.7 1267.6,490.7 1299.7,493.3 1299.5,507.7 1295.8,519.3" fill="#a1c5b2"/>
<polygon points="1270.9,488.7 1246.2,478.8 1249.7,465.6 1275.9,456.6 1296.2,467.3 1286.6,481.3" fill="#a1c5b2"/>
<polygon points="717.7,744.1 709.0,729.9 719.9,717.1 731.4,717.3 734.2,728.8 729.4,742.7" fill="#a1c5b2"/>
<polygon points="1289.4,870.8 1280.7,875.3 1270.8,869.1 1273.4,859.6 1285.1,855.6 1295.2,862.7" fill="#88b99f"/>
<polygon points="1561.6,479.2 1556.2,482.8 1545.2,482.0 1542.5,477.6 1548.9,474.2 1559.3,473.7" fill="#88b99f"/>
<polygon points="711.8,408.6 708.2,399.1 715.5,391.3 725.9,392.3 731.9,401.0 724.4,406.0" fill="#88b99f"/>
<polygon points="1841.6,514.5 1838.7,509.7 1839.5,502.3 1853.7,502.3 1857.5,508.5 1858.1,513.7" fill="#88b99f"/>
<polygon points="1098.1,428.2 1092.9,420.6 1108.6,415.7 1119.3,413.7 1125.3,425.3 1113.9,435.9" fill="#a1c5b2"/>
<polygon points="1385.8,834.2 1379.1,837.7 1374.3,834.6 1371.3,827.1 1379.6,822.5 1384.5,828.4" fill="#a1c5b2"/>
<polygon points="1010.3,881.7 1011.7,865.7 1017.0,852.5 1025.5,859.2 1023.1,879.7 1018.7,887.3" fill="#a1c5b2"/>
<polygon points="944.2,895.9 936.0,894.1 930.0,874.5 937.7,862.0 948.2,862.9 949.9,881.9" fill="#c4c5bc"/>
<polygon points="1881.6,795.3 1860.9,805.5 1849.0,789.8 1856.6,766.9 1873.1,769.6 1889.6,779.7" fill="#a1c5b2"/>
<polygon points="664.9,407.1 664.2,395.2 677.7,390.9 690.7,394.9 696.3,408.7 676.5,416.5" fill="#88b99f"/>
<polygon points="930.4,590.1 912.2,588.5 905.5,568.7 921.6,553.7 945.9,564.2 948.0,577.8" fill="#88b99f"/>
<polygon points="678.3,549.2 673.5,533.8 679.4,518.7 688.1,522.8 693.9,534.6 690.2,544.1" fill="#88b99f"/>
<polygon points="1443.8,575.7 1436.7,588.0 1426.5,577.4 1427.7,564.8 1436.4,555.7 1443.0,565.8" fill="#a1c5b2"/>
<polygon points="1304.2,492.1 1292.2,488.7 1288.5,478.8 1302.0,475.6 1317.0,476.5 1322.5,487.4" fill="#a1c5b2"/>
<polygon points="977.3,561.6 984.8,542.1 1001.3,547.2 1015.9,556.7 1010.1,576.5 990.1,575.2" fill="#a1c5b2"/>
<polygon points="765.7,436.8 756.5,440.8 750.6,424.6 757.5,408.8 767.5,417.4 771.8,427.1" fill="#a1c5b2"/>
<polygon points="1183.3,657.8 1179.6,644.0 1185.1,630.8 1194.3,629.2 1197.9,649.8 1190.5,664.3" fill="#a1c5b2"/>
<polygon points="988.7,541.5 1003.4,520.7 1025.1,514.5 1032.3,532.0 1029.0,550.8 1009.0,559.5" fill="#a1c5b2"/>
<polygon points="956.7,622.4 941.7,621.8 936.6,617.9 937.8,611.2 948.8,606.3 958.6,613.9" fill="#c4c5bc"/>
<polygon points="722.6,430.7 712.2,421.9 725.1,412.1 745.4,415.0 752.2,423.9 741.8,432.0" fill="#a1c5b2"/>
<polygon points="1091.4,506.5 1073.9,513.3 1052.0,509.5 1056.6,487.7 1072.2,479.2 1096.2,485.7" fill="#88b99f"/>
<polygon points="1309.4,671.2 1289.3,674.5 1278.1,666.7 1281.0,649.0 1294.8,643.7 1312.7,656.6" fill="#a1c5b2"/>
<polygon points="874.2,377.0 867.2,365.9 868.6,350.5 876.6,348.2 884.2,353.9 882.9,368.8" fill="#88b99f"/>
<polygon points="1062.4,680.3 1052.3,674.9 1046.5,657.2 1056.8,647.4 1068.8,649.5 1068.1,665.0" fill="#c4c5bc"/>
<polygon points="1133.0,606.6 1124.6,588.4 1142.2,576.4 1159.9,586.3 1164.0,599.0 1153.2,610.2" fill="#88b99f"/>
<polygon points="785.9,489.8 770.3,501.6 755.3,496.8 753.3,483.6 764.4,475.4 776.7,477.7" fill="#a1c5b2"/>
<polygon points="771.6,381.7 760.8,378.6 761.5,364.3 770.8,356.3 782.9,364.3 781.5,377.9" fill="#88b99f"/>
<polygon points="1090.8,548.3 1072.1,546.5 1063.1,538.9 1087.2,535.8 1109.5,538.8 1111.4,545.5" fill="#a1c5b2"/>
<polygon points="1512.6,492.2 1497.0,486.6 1497.3,479.1 1515.5,477.2 1527.8,480.2 1532.2,485.6" fill="#a1c5b2"/>
<polygon points="1500.1,655.2 1491.1,663.4 1478.4,660.3 1471.6,654.4 1476.4,648.7 1491.0,648.8" fill="#a1c5b2"/>
<polygon points="1214.7,779.2 1210.3,762.9 1213.1,742.9 1222.6,744.1 1231.4,753.9 1229.0,768.4" fill="#a1c5b2"/>
<polygon points="1723.4,802.2 1734.5,795.3 1747.4,795.0 1759.0,798.8 1755.3,804.9 1738.4,805.8" fill="#a1c5b2"/>
<polygon points="1000.8,462.9 983.9,473.0 960.6,470.0 950.3,461.7 963.8,454.2 986.1,454.8" fill="#a1c5b2"/>
<polygon points="1724.0,517.9 1707.7,509.2 1706.0,499.6 1716.5,486.1 1733.1,491.7 1732.0,505.6" fill="#a1c5b2"/>
<polygon points="1792.6,826.0 1796.2,811.4 1817.6,809.7 1831.4,812.6 1843.7,824.8 1817.7,834.5" fill="#a1c5b2"/>
<polygon points="798.9,673.4 773.2,673.7 762.3,668.4 757.7,658.6 783.7,652.3 793.5,660.1" fill="#a1c5b2"/>
<polygon points="1040.4,362.7 1033.2,345.2 1053.7,332.6 1076.2,343.4 1075.2,357.0 1058.0,374.8" fill="#a1c5b2"/>
<polygon points="1288.1,730.8 1281.8,709.9 1286.1,696.2 1295.6,686.0 1299.0,704.6 1297.4,724.2" fill="#a1c5b2"/>
<polygon points="1741.5,462.2 1731.9,451.5 1734.6,430.9 1745.8,423.6 1749.9,441.0 1751.8,456.0" fill="#88b99f"/>
<polygon points="1546.0,365.7 1549.7,348.6 1555.0,339.3 1559.4,353.2 1562.2,366.6 1554.1,378.8" fill="#a1c5b2"/>
<polygon points="1215.8,691.9 1195.5,705.2 1176.9,703.7 1173.9,685.8 1181.1,671.9 1199.5,673.1" fill="#a1c5b2"/>
<polygon points="1767.5,805.2 1758.9,788.1 1764.3,770.7 1771.8,769.5 1780.1,778.8 1778.7,800.1" fill="#88b99f"/>
<polygon points="1295.7,323.1 1305.7,314.4 1322.2,308.5 1335.6,319.3 1324.5,327.6 1307.7,333.4" fill="#a1c5b2"/>
<polygon points="1854.6,655.4 1838.0,648.9 1831.0,631.5 1848.3,626.2 1872.7,632.9 1870.2,646.2" fill="#a1c5b2"/>
<polygon points="786.3,659.4 779.4,644.9 783.0,630.2 799.3,628.8 811.9,640.2 803.7,654.9" fill="#a1c5b2"/>
<polygon points="1162.4,823.5 1144.0,831.1 1126.2,829.2 1117.2,810.1 1138.2,805.2 1161.8,807.8" fill="#88b99f"/>
<polygon points="1117.6,480.9 1097.0,478.3 1088.5,473.3 1102.8,467.9 1132.1,467.9 1143.7,475.7" fill="#a1c5b2"/>
<polygon points="950.7,787.4 942.0,783.0 941.9,770.6 951.6,759.9 960.3,768.2 958.7,783.3" fill="#a1c5b2"/>
<polygon points="976.2,680.6 970.1,682.4 963.8,680.3 962.6,666.1 970.5,664.5 976.3,668.7" fill="#c4c5bc"/>
<polygon points="1769.7,374.1 1760.7,358.5 1761.9,336.9 1769.0,334.9 1774.5,336.2 1775.5,358.8" fill="#88b99f"/>
<polygon points="1164.7,616.6 1154.8,620.0 1127.7,618.7 1122.4,609.5 1143.0,605.3 1162.9,604.8" fill="#a1c5b2"/>
<polygon points="1752.4,837.0 1748.5,832.6 1766.6,827.2 1785.3,832.9 1784.9,837.6 1764.2,839.8" fill="#a1c5b2"/>
<polygon points="1089.5,470.2 1078.9,473.9 1075.2,467.6 1074.8,460.4 1085.3,458.7 1089.3,464.9" fill="#88b99f"/>
<polygon points="1242.7,462.0 1225.4,462.2 1214.4,455.8 1220.8,451.1 1238.9,450.5 1251.0,456.3" fill="#88b99f"/>
<polygon points="942.5,579.3 929.2,576.3 926.4,562.0 932.8,549.7 948.2,555.7 950.4,572.4" fill="#a1c5b2"/>
<polygon points="1391.1,393.1 1400.0,377.4 1417.4,366.6 1438.5,374.3 1435.8,391.3 1417.3,403.8" fill="#a1c5b2"/>
<polygon points="1564.8,822.3 1545.3,814.3 1549.8,804.7 1574.0,798.5 1598.2,807.4 1586.2,815.0" fill="#88b99f"/>
<polygon points="1100.4,602.0 1083.7,591.9 1092.4,578.5 1109.7,573.7 1131.7,581.7 1126.1,601.1" fill="#a1c5b2"/>
<polygon points="830.8,462.2 815.8,456.1 815.8,446.0 840.0,442.6 854.7,449.4 857.8,462.5" fill="#88b99f"/>
<polygon points="1226.1,418.4 1217.4,422.3 1200.4,419.3 1205.3,411.8 1216.4,407.2 1227.8,410.6" fill="#a1c5b2"/>
<polygon points="1490.4,817.3 1480.6,836.6 1465.2,829.3 1463.7,814.9 1467.0,794.3 1481.5,803.7" fill="#88b99f"/>
<polygon points="1719.7,306.9 1707.5,293.4 1715.8,278.2 1733.0,274.2 1751.7,287.0 1738.4,298.8" fill="#a1c5b2"/>
<polygon points="1063.6,549.2 1076.7,535.9 1095.5,534.9 1114.6,542.2 1104.4,557.2 1088.1,558.3" fill="#88b99f"/>
<polygon points="1795.8,575.5 1775.0,578.0 1753.9,571.6 1757.4,558.1 1784.4,554.2 1805.6,564.0" fill="#88b99f"/>
<polygon points="1200.5,699.1 1201.2,686.7 1213.3,678.4 1221.4,692.0 1218.2,706.9 1207.6,711.5" fill="#88b99f"/>
<polygon points="1288.3,490.5 1282.4,502.2 1272.0,501.2 1266.4,489.1 1272.6,478.2 1283.3,482.6" fill="#a1c5b2"/>
<polygon points="1459.5,720.2 1456.4,702.0 1466.2,682.7 1478.1,690.6 1481.9,709.2 1474.3,723.2" fill="#a1c5b2"/>
<polygon points="1283.6,408.5 1302.2,401.6 1326.0,400.1 1345.0,407.5 1329.7,413.0 1306.2,415.8" fill="#a1c5b2"/>
<polygon points="1490.6,500.7 1475.4,502.2 1465.5,495.0 1463.1,482.1 1483.3,476.5 1500.5,488.1" fill="#88b99f"/>
<polygon points="1388.6,701.4 1383.6,690.2 1394.5,679.8 1413.8,684.3 1423.2,693.6 1409.3,702.3" fill="#a1c5b2"/>
<polygon points="1806.6,753.1 1796.8,738.3 1798.0,720.0 1808.3,702.7 1814.8,718.9 1814.4,739.2" fill="#a1c5b2"/>
<polygon points="1626.0,656.1 1634.9,648.0 1653.0,643.0 1669.8,652.1 1664.8,661.4 1644.8,663.1" fill="#a1c5b2"/>
<polygon points="759.5,437.5 754.4,448.0 746.9,439.4 742.3,429.2 750.1,422.1 762.0,421.2" fill="#88b99f"/>
<polygon points="1684.3,357.8 1683.9,351.9 1690.1,350.0 1698.5,351.9 1699.8,356.9 1692.1,358.6" fill="#a1c5b2"/>
<polygon points="1637.7,807.5 1631.2,800.0 1630.5,791.1 1641.1,788.2 1646.9,794.5 1646.5,803.8" fill="#88b99f"/>
<polygon points="1497.6,485.0 1482.8,489.7 1469.3,480.9 1468.3,472.5 1487.8,466.5 1504.1,473.2" fill="#a1c5b2"/>
<polygon points="1292.3,519.1 1273.8,521.5 1263.5,510.9 1268.3,500.3 1283.7,499.3 1305.7,503.5" fill="#88b99f"/>
<polygon points="1088.9,311.8 1078.4,302.9 1071.7,288.3 1094.3,282.0 1108.1,291.9 1106.0,308.5" fill="#a1c5b2"/>
<polygon points="986.2,767.7 976.0,756.1 980.7,743.6 1002.1,743.6 1010.8,754.5 1000.2,765.6" fill="#88b99f"/>
<polygon points="964.7,656.2 944.8,665.1 929.1,656.2 928.7,642.1 945.2,636.7 964.9,644.1" fill="#a1c5b2"/>
<polygon points="1145.0,699.1 1129.1,694.3 1126.0,687.4 1134.5,682.9 1156.0,681.0 1160.4,692.0" fill="#a1c5b2"/>
<polygon points="658.2,819.6 656.9,809.3 660.6,801.7 668.0,799.5 671.0,809.7 666.7,816.6" fill="#88b99f"/>
<polygon points="713.1,643.8 695.6,644.0 694.9,624.6 711.2,613.2 726.3,624.0 734.4,638.9" fill="#a1c5b2"/>
<polygon points="933.8,807.9 917.6,810.1 909.0,804.2 912.9,799.1 926.8,794.5 937.8,800.4" fill="#88b99f"/>
<polygon points="1377.6,689.0 1375.8,674.4 1385.1,665.4 1395.5,666.4 1398.1,682.3 1390.7,692.1" fill="#a1c5b2"/>
<polygon points="1458.5,472.5 1432.9,468.9 1424.0,457.8 1447.0,451.7 1463.7,455.5 1471.1,464.1" fill="#a1c5b2"/>
<polygon points="645.2,741.3 638.2,733.1 645.9,726.6 655.1,724.8 656.2,737.1 652.8,744.6" fill="#a1c5b2"/>
<polygon points="1017.3,335.2 1014.1,317.9 1036.7,309.9 1057.7,318.8 1053.4,332.6 1038.3,339.5" fill="#a1c5b2"/>
<polygon points="1474.7,752.3 1456.9,743.3 1450.6,727.7 1472.3,722.6 1497.5,729.8 1491.4,744.5" fill="#88b99f"/>
<polygon points="1413.6,605.9 1427.8,588.1 1452.7,587.0 1463.3,598.1 1460.2,614.7 1439.2,614.4" fill="#a1c5b2"/>
<polygon points="777.7,749.0 768.7,743.1 769.0,733.2 780.0,730.4 798.0,735.8 794.2,744.0" fill="#a1c5b2"/>
<polygon points="1178.9,668.3 1164.4,658.2 1158.7,644.6 1173.4,634.7 1191.8,638.3 1193.1,655.2" fill="#a1c5b2"/>
<polygon points="1293.2,592.5 1281.5,603.1 1256.2,600.8 1247.0,591.2 1261.2,579.2 1285.1,582.9" fill="#a1c5b2"/>
<polygon points="1267.6,541.8 1256.3,537.1 1260.9,527.2 1268.4,524.7 1277.3,530.0 1275.6,536.5" fill="#a1c5b2"/>
<polygon points="831.3,328.7 831.0,312.1 839.4,295.7 860.9,300.7 871.5,316.8 850.6,330.2" fill="#a1c5b2"/>
<polygon points="704.0,402.2 697.6,399.3 703.4,395.1 714.0,391.5 723.4,397.6 715.2,404.0" fill="#88b99f"/>
<polygon points="1662.9,714.4 1663.5,694.3 1675.5,690.5 1684.9,697.4 1685.0,709.5 1675.6,715.9" fill="#a1c5b2"/>
<polygon points="1641.8,642.5 1623.6,636.6 1619.4,622.0 1642.3,617.8 1666.3,620.9 1659.1,634.0" fill="#a1c5b2"/>
<polygon points="1377.2,673.4 1352.0,663.2 1352.3,645.6 1381.7,644.1 1396.1,648.2 1406.7,664.1" fill="#88b99f"/>
<polygon points="1808.5,374.2 1796.3,384.9 1772.2,382.7 1759.0,371.7 1774.5,355.2 1798.4,361.2" fill="#a1c5b2"/>
<polygon points="754.3,379.7 737.4,377.6 731.3,364.2 740.5,352.6 758.9,352.6 765.0,367.6" fill="#a1c5b2"/>
<polygon points="1869.1,762.5 1853.4,769.5 1838.3,763.0 1836.0,753.7 1850.8,745.4 1861.7,752.7" fill="#88b99f"/>
<polygon points="1040.3,637.1 1025.1,636.8 1027.2,625.5 1035.2,619.2 1046.1,625.7 1047.8,634.4" fill="#88b99f"/>
<polygon points="1538.5,309.1 1540.2,303.3 1547.9,300.5 1554.1,305.1 1548.6,311.5" fill="#d6d9d2"/>
<polygon points="1414.2,365.1 1407.6,362.4 1412.2,359.6 1420.4,359.1 1419.6,364.4" fill="#d6d9d2"/>
<polygon points="1453.9,361.0 1451.5,364.3 1447.6,361.8 1448.4,357.0 1453.5,355.3" fill="#d6d9d2"/>
<polygon points="1398.2,388.1 1402.2,381.6 1411.5,383.5 1412.0,390.4 1404.8,392.4" fill="#d6d9d2"/>
<polygon points="1542.7,312.2 1547.2,305.6 1553.2,306.1 1554.1,315.0 1548.4,317.0" fill="#c8cfc8"/>
<polygon points="1408.3,422.0 1415.6,418.8 1426.4,420.1 1427.2,422.9 1417.5,425.1" fill="#d6d9d2"/>
<polygon points="1487.4,310.6 1488.8,307.4 1493.5,304.9 1495.2,308.8 1493.0,311.7" fill="#c8cfc8"/>
<polygon points="1475.6,322.4 1475.1,318.5 1480.8,315.2 1487.3,319.3 1485.0,324.9" fill="#d6d9d2"/>
<polygon points="1546.1,361.3 1537.0,357.3 1546.6,354.2 1559.9,355.2 1558.8,359.2" fill="#c8cfc8"/>
<polygon points="1456.1,372.0 1452.2,364.2 1456.5,357.2 1468.7,360.3 1466.8,368.5" fill="#d6d9d2"/>
<polygon points="1664.1,306.7 1670.7,301.2 1678.2,301.0 1679.6,308.3 1672.3,313.3" fill="#d6d9d2"/>
<polygon points="1428.8,371.2 1417.2,369.1 1424.0,364.4 1437.3,363.6 1437.1,369.4" fill="#d6d9d2"/>
<polygon points="1561.8,305.7 1560.8,298.7 1569.0,300.1 1569.7,305.7 1566.1,312.3" fill="#c8cfc8"/>
<polygon points="1458.3,406.1 1447.3,412.8 1436.1,404.0 1443.4,396.2 1455.3,398.0" fill="#d6d9d2"/>
<polygon points="1469.7,374.8 1468.7,366.5 1471.7,363.1 1475.3,367.1 1473.9,376.4" fill="#c8cfc8"/>
<polygon points="1404.1,300.2 1402.0,295.4 1405.5,291.2 1411.4,293.3 1410.5,298.9" fill="#d6d9d2"/>
<polygon points="1496.2,322.9 1487.4,324.3 1481.7,321.1 1490.2,318.8 1498.2,319.6" fill="#d6d9d2"/>
<polygon points="1495.1,356.9 1490.7,359.0 1486.6,356.2 1489.1,352.2 1492.9,350.8" fill="#c8cfc8"/>
<polygon points="1601.3,349.6 1594.0,343.7 1602.2,334.2 1616.1,341.3 1615.3,350.3" fill="#d6d9d2"/>
<polygon points="1547.9,305.1 1541.0,312.3 1527.5,309.6 1528.1,300.7 1540.1,297.7" fill="#d6d9d2"/>
<polygon points="1614.4,339.9 1610.8,335.9 1613.7,329.3 1617.9,331.7 1617.8,338.8" fill="#d6d9d2"/>
<polygon points="1450.9,373.3 1442.5,366.2 1446.3,357.9 1454.9,356.0 1461.5,365.3" fill="#c8cfc8"/>
<polygon points="1451.5,300.3 1445.6,293.4 1457.5,287.2 1466.4,292.7 1463.1,302.3" fill="#d6d9d2"/>
<polygon points="1432.4,304.8 1423.9,300.0 1431.9,291.8 1442.0,296.8 1442.7,304.2" fill="#d6d9d2"/>
<polygon points="1503.9,333.3 1498.5,331.2 1498.6,325.4 1501.8,322.5 1505.4,327.0" fill="#d6d9d2"/>
<polygon points="1422.4,404.7 1414.8,402.7 1411.1,395.6 1418.7,391.7 1425.3,394.3" fill="#d6d9d2"/>
<polygon points="1676.4,313.8 1664.8,309.8 1668.2,303.4 1680.2,301.0 1684.4,308.6" fill="#d6d9d2"/>
<polygon points="1671.2,309.1 1664.2,306.8 1663.0,298.4 1670.1,292.9 1677.2,300.1" fill="#d6d9d2"/>
<polygon points="1619.8,340.1 1611.1,334.4 1621.6,327.6 1631.1,332.4 1628.7,340.0" fill="#c8cfc8"/>
<polygon points="1478.1,365.1 1485.4,359.0 1494.1,360.9 1498.7,368.5 1486.1,368.5" fill="#c8cfc8"/>
<polygon points="1420.3,373.5 1415.6,373.1 1414.0,371.2 1416.3,368.9 1421.0,370.0" fill="#c8cfc8"/>
<polygon points="1414.0,377.3 1414.3,373.6 1418.6,372.1 1422.1,374.3 1421.6,377.7" fill="#c8cfc8"/>
<polygon points="1621.7,325.3 1613.6,330.0 1604.3,328.9 1604.9,320.3 1613.9,317.5" fill="#d6d9d2"/>
<polygon points="1507.4,306.8 1510.4,299.3 1516.8,296.7 1524.4,303.3 1516.6,307.3" fill="#c8cfc8"/>
<polygon points="1451.1,317.3 1439.9,322.7 1435.7,315.8 1438.2,307.9 1447.7,311.0" fill="#d6d9d2"/>
<polygon points="1653.9,310.5 1652.0,305.1 1661.7,301.8 1668.9,308.5 1660.5,315.0" fill="#c8cfc8"/>
<polygon points="1510.9,353.8 1497.8,356.6 1495.8,348.3 1500.9,342.2 1511.5,345.2" fill="#c8cfc8"/>
<polygon points="1518.3,301.0 1513.6,294.2 1518.5,286.1 1524.2,288.8 1524.9,299.7" fill="#d6d9d2"/>
<polygon points="1631.7,324.0 1635.4,316.6 1643.7,318.6 1649.1,324.1 1640.2,327.7" fill="#c8cfc8"/>
<polygon points="1501.6,309.6 1496.4,305.9 1496.4,300.4 1504.3,300.1 1507.0,305.8" fill="#d6d9d2"/>
<polygon points="1458.3,379.1 1463.4,373.6 1472.2,374.6 1471.8,381.8 1465.1,386.5" fill="#d6d9d2"/>
<polygon points="1468.4,365.9 1472.8,362.0 1480.8,362.1 1483.3,366.6 1475.1,368.2" fill="#d6d9d2"/>
<polygon points="1476.4,324.9 1470.9,317.5 1475.0,308.2 1483.8,312.5 1485.5,320.2" fill="#c8cfc8"/>
<polygon points="1553.0,336.2 1548.3,330.9 1551.3,321.2 1556.9,323.3 1560.6,332.4" fill="#d6d9d2"/>
<polygon points="1441.2,340.6 1436.7,336.6 1440.6,332.4 1447.0,333.8 1448.1,338.8" fill="#d6d9d2"/>
<polygon points="1523.7,339.2 1518.0,342.9 1516.3,333.6 1519.6,329.1 1523.3,332.3" fill="#d6d9d2"/>
<polygon points="1153.6,582.6 1147.1,581.8 1146.7,576.0 1150.5,572.4 1154.1,575.2" fill="#c9cfc8"/>
<polygon points="1154.4,575.4 1149.0,579.3 1143.0,575.7 1145.7,570.6 1151.6,567.6" fill="#c9cfc8"/>
<polygon points="1138.2,556.9 1133.8,554.3 1136.6,550.0 1142.0,550.3 1143.9,555.0" fill="#c9cfc8"/>
<polygon points="1116.9,590.8 1111.5,589.6 1112.5,585.3 1117.0,584.5 1119.1,588.0" fill="#c9cfc8"/>
<polygon points="1192.1,587.3 1180.7,585.8 1183.5,582.9 1194.7,581.4 1201.3,585.0" fill="#c9cfc8"/>
<polygon points="1209.3,587.5 1202.6,582.6 1206.9,575.7 1212.0,576.8 1214.2,582.8" fill="#c9cfc8"/>
<polygon points="1138.1,576.7 1135.7,572.0 1139.8,567.5 1146.8,569.8 1144.0,576.3" fill="#c9cfc8"/>
<polygon points="1158.0,554.8 1150.8,552.3 1158.6,550.3 1164.8,550.3 1166.8,553.7" fill="#c9cfc8"/>
<polygon points="1212.5,562.3 1207.1,559.3 1210.3,553.9 1215.7,554.5 1218.8,559.5" fill="#c9cfc8"/>
<polygon points="1131.2,569.3 1126.7,563.1 1132.3,557.9 1138.4,561.1 1136.4,567.3" fill="#c9cfc8"/>
<polygon points="1168.1,593.0 1160.9,588.6 1163.2,581.4 1170.9,583.3 1173.9,587.7" fill="#c9cfc8"/>
<polygon points="1165.7,565.6 1165.2,559.8 1175.0,557.5 1180.6,563.2 1173.5,567.0" fill="#c9cfc8"/>
<polygon points="1125.6,571.9 1121.5,571.4 1120.3,567.7 1125.2,566.4 1129.9,568.6" fill="#c9cfc8"/>
<polygon points="1216.7,558.9 1215.2,552.0 1218.4,547.6 1222.6,551.1 1220.6,558.4" fill="#c9cfc8"/>
<polyline points="1125.8,318.2 1113.4,360.5 1092.3,402.8 1083.5,430.9" fill="none" stroke="#7f9bb3" stroke-width="1.5" stroke-opacity="0.85" stroke-linejoin="round"/>
<polyline points="1083.5,430.9 1120.5,466.2 1155.7,490.8 1175.1,510.2" fill="none" stroke="#7f9bb3" stroke-width="1.5" stroke-opacity="0.85" stroke-linejoin="round"/>
<polyline points="1175.1,510.2 1216.7,534.9 1250.8,536.7 1286.1,510.2" fill="none" stroke="#7f9bb3" stroke-width="1.5" stroke-opacity="0.85" stroke-linejoin="round"/>
<polyline points="1286.1,510.2 1328.4,489.1 1331.9,430.9 1330.1,372.1" fill="none" stroke="#7f9bb3" stroke-width="1.5" stroke-opacity="0.85" stroke-linejoin="round"/>
<polyline points="1330.1,372.1 1367.1,353.4 1388.3,342.9" fill="none" stroke="#7f9bb3" stroke-width="1.5" stroke-opacity="0.85" stroke-linejoin="round"/>
<polyline points="1330.1,372.1 1289.6,367.5 1249.8,370.0" fill="none" stroke="#7f9bb3" stroke-width="1.5" stroke-opacity="0.85" stroke-linejoin="round"/>
<polyline points="1249.8,370.0 1226.2,430.9 1198.0,473.2 1175.1,510.2" fill="none" stroke="#7f9bb3" stroke-width="1.5" stroke-opacity="0.85" stroke-linejoin="round"/>
<polyline points="1249.8,370.0 1250.8,290.0" fill="none" stroke="#7f9bb3" stroke-width="1.5" stroke-opacity="0.85" stroke-linejoin="round"/>
<polyline points="1125.8,318.2 1155.7,290.0" fill="none" stroke="#7f9bb3" stroke-width="1.5" stroke-opacity="0.85" stroke-linejoin="round"/>
<polyline points="1330.1,372.1 1331.9,290.0" fill="none" stroke="#7f9bb3" stroke-width="1.5" stroke-opacity="0.85" stroke-linejoin="round"/>
<polyline points="1328.4,489.1 1353.7,529.6" fill="none" stroke="#7f9bb3" stroke-width="1.5" stroke-opacity="0.85" stroke-linejoin="round"/>
<polyline points="1353.7,529.6 1402.4,515.5 1451.7,497.9" fill="none" stroke="#7f9bb3" stroke-width="1.5" stroke-opacity="0.85" stroke-linejoin="round"/>
<polyline points="1175.1,510.2 1120.5,536.7 1060.6,550.7" fill="none" stroke="#7f9bb3" stroke-width="1.5" stroke-opacity="0.85" stroke-linejoin="round"/>
<polyline points="1083.5,430.9 1071.1,501.4 1060.6,543.7" fill="none" stroke="#7f9bb3" stroke-width="1.5" stroke-opacity="0.85" stroke-linejoin="round"/>
<polyline points="1369.9,409.8 1330.1,372.1" fill="none" stroke="#7f9bb3" stroke-width="1.5" stroke-opacity="0.85" stroke-linejoin="round"/>
<polyline points="1369.9,409.8 1402.4,413.3 1458.7,416.8" fill="none" stroke="#7f9bb3" stroke-width="1.5" stroke-opacity="0.85" stroke-linejoin="round"/>
<polyline points="1125.8,318.2 1057.0,345.7" fill="none" stroke="#7f9bb3" stroke-width="1.5" stroke-opacity="0.85" stroke-linejoin="round"/>
<polyline points="1083.5,430.9 1155.7,413.3 1249.8,370.0" fill="none" stroke="#7f9bb3" stroke-width="1.5" stroke-opacity="0.85" stroke-linejoin="round"/>
<polyline points="1249.8,370.0 1296.7,325.2 1388.3,342.9" fill="none" stroke="#7f9bb3" stroke-width="1.5" stroke-opacity="0.85" stroke-linejoin="round"/>
<polyline points="1458.7,416.8 1500.0,395.7" fill="none" stroke="#7f9bb3" stroke-width="1.5" stroke-opacity="0.85" stroke-linejoin="round"/>
<polyline points="1388.3,342.9 1412.9,321.7 1500.0,311.1" fill="none" stroke="#7f9bb3" stroke-width="1.5" stroke-opacity="0.85" stroke-linejoin="round"/>
<polyline points="1175.1,510.2 1183.9,557.8 1198.0,600.1" fill="none" stroke="#7f9bb3" stroke-width="1.5" stroke-opacity="0.85" stroke-linejoin="round"/>
<polyline points="940.0,706.2 912.8,668.6 894.0,631.1" fill="none" stroke="#7f9bb3" stroke-width="1.5" stroke-opacity="0.85" stroke-linejoin="round"/>
<polyline points="940.0,706.2 946.9,648.2 957.1,580.0" fill="none" stroke="#7f9bb3" stroke-width="1.5" stroke-opacity="0.85" stroke-linejoin="round"/>
<polyline points="940.0,706.2 980.9,682.3 1032.1,655.0 1068.9,631.1" fill="none" stroke="#7f9bb3" stroke-width="1.5" stroke-opacity="0.85" stroke-linejoin="round"/>
<polyline points="940.0,706.2 980.9,733.4 1032.1,760.7 1083.2,764.1" fill="none" stroke="#7f9bb3" stroke-width="1.5" stroke-opacity="0.85" stroke-linejoin="round"/>
<polyline points="940.0,706.2 980.9,750.5 1025.3,789.7" fill="none" stroke="#7f9bb3" stroke-width="1.5" stroke-opacity="0.85" stroke-linejoin="round"/>
<polyline points="940.0,706.2 926.4,767.5 905.9,818.7 892.3,852.8" fill="none" stroke="#7f9bb3" stroke-width="1.5" stroke-opacity="0.85" stroke-linejoin="round"/>
<polyline points="940.0,706.2 878.7,723.2 827.5,743.7 776.4,770.9 725.2,798.2 694.6,805.0" fill="none" stroke="#7f9bb3" stroke-width="1.5" stroke-opacity="0.85" stroke-linejoin="round"/>
<polyline points="940.0,706.2 895.7,689.1 851.4,672.1" fill="none" stroke="#7f9bb3" stroke-width="1.5" stroke-opacity="0.85" stroke-linejoin="round"/>
<polyline points="716.7,661.8 721.8,716.4 708.2,767.5 694.6,805.0" fill="none" stroke="#7f9bb3" stroke-width="1.5" stroke-opacity="0.85" stroke-linejoin="round"/>
<polyline points="716.7,661.8 726.9,638.0 713.3,595.3" fill="none" stroke="#7f9bb3" stroke-width="1.5" stroke-opacity="0.85" stroke-linejoin="round"/>
<polyline points="894.0,631.1 851.4,672.1" fill="none" stroke="#7f9bb3" stroke-width="1.5" stroke-opacity="0.85" stroke-linejoin="round"/>
<polyline points="851.4,672.1 793.4,682.3 725.2,682.3" fill="none" stroke="#7f9bb3" stroke-width="1.5" stroke-opacity="0.85" stroke-linejoin="round"/>
<polyline points="894.0,631.1 878.7,597.0" fill="none" stroke="#7f9bb3" stroke-width="1.5" stroke-opacity="0.85" stroke-linejoin="round"/>
<polyline points="694.6,805.0 742.3,835.7 793.4,880.0" fill="none" stroke="#7f9bb3" stroke-width="1.5" stroke-opacity="0.85" stroke-linejoin="round"/>
<polyline points="926.4,738.5 878.7,767.5 827.5,818.7 793.4,880.0" fill="none" stroke="#7f9bb3" stroke-width="1.5" stroke-opacity="0.85" stroke-linejoin="round"/>
<polyline points="1025.3,789.7 1049.1,818.7 1066.2,880.0" fill="none" stroke="#7f9bb3" stroke-width="1.5" stroke-opacity="0.85" stroke-linejoin="round"/>
<polyline points="1069.4,631.1 1118.2,638.0 1165.9,641.4 1208.5,647.2" fill="none" stroke="#7f9bb3" stroke-width="1.5" stroke-opacity="0.85" stroke-linejoin="round"/>
<polyline points="1208.5,647.2 1165.9,663.5 1138.6,692.5 1108.0,730.0 1092.6,760.7" fill="none" stroke="#7f9bb3" stroke-width="1.5" stroke-opacity="0.85" stroke-linejoin="round"/>
<polyline points="1092.6,760.7 1084.1,801.6 1077.3,828.9" fill="none" stroke="#7f9bb3" stroke-width="1.5" stroke-opacity="0.85" stroke-linejoin="round"/>
<polyline points="1208.5,647.2 1237.5,614.1 1251.2,580.0" fill="none" stroke="#7f9bb3" stroke-width="1.5" stroke-opacity="0.85" stroke-linejoin="round"/>
<polyline points="1069.4,631.1 1050.0,600.5" fill="none" stroke="#7f9bb3" stroke-width="1.5" stroke-opacity="0.85" stroke-linejoin="round"/>
<polyline points="1069.4,631.1 1090.9,580.0" fill="none" stroke="#7f9bb3" stroke-width="1.5" stroke-opacity="0.85" stroke-linejoin="round"/>
<polyline points="1165.9,641.4 1193.2,600.5 1196.6,580.0" fill="none" stroke="#7f9bb3" stroke-width="1.5" stroke-opacity="0.85" stroke-linejoin="round"/>
<polyline points="728.1,526.0 721.0,555.9 714.0,592.9" fill="none" stroke="#7f9bb3" stroke-width="1.5" stroke-opacity="0.85" stroke-linejoin="round"/>
<polyline points="826.7,526.0 854.9,571.8" fill="none" stroke="#7f9bb3" stroke-width="1.5" stroke-opacity="0.85" stroke-linejoin="round"/>
<polyline points="974.6,533.0 987.0,555.9 939.4,589.4" fill="none" stroke="#7f9bb3" stroke-width="1.5" stroke-opacity="0.85" stroke-linejoin="round"/>
<polyline points="1020.4,527.8 1052.1,466.1 1083.8,430.9" fill="none" stroke="#7f9bb3" stroke-width="1.5" stroke-opacity="0.85" stroke-linejoin="round"/>
<polyline points="974.6,533.0 921.8,536.6 851.3,533.0" fill="none" stroke="#7f9bb3" stroke-width="1.5" stroke-opacity="0.85" stroke-linejoin="round"/>
<polyline points="851.3,533.0 780.9,543.6 728.1,526.0" fill="none" stroke="#7f9bb3" stroke-width="1.5" stroke-opacity="0.85" stroke-linejoin="round"/>
<polyline points="765.0,547.1 798.5,571.8 854.9,571.8" fill="none" stroke="#7f9bb3" stroke-width="1.5" stroke-opacity="0.85" stroke-linejoin="round"/>
<polyline points="1034.5,559.5 992.2,585.9 957.0,600.0" fill="none" stroke="#7f9bb3" stroke-width="1.5" stroke-opacity="0.85" stroke-linejoin="round"/>
<polyline points="1458.8,416.8 1527.5,391.5 1609.3,392.9 1670.2,393.2" fill="none" stroke="#7f9bb3" stroke-width="1.5" stroke-opacity="0.85" stroke-linejoin="round"/>
<polyline points="1527.5,391.5 1580.4,433.8 1626.2,453.8 1622.7,500.4" fill="none" stroke="#7f9bb3" stroke-width="1.5" stroke-opacity="0.85" stroke-linejoin="round"/>
<polyline points="1516.2,459.1 1527.5,391.5" fill="none" stroke="#7f9bb3" stroke-width="1.5" stroke-opacity="0.85" stroke-linejoin="round"/>
<polyline points="1670.2,393.2 1737.2,379.9" fill="none" stroke="#7f9bb3" stroke-width="1.5" stroke-opacity="0.85" stroke-linejoin="round"/>
<polyline points="1626.2,453.8 1696.7,501.4 1756.6,581.8" fill="none" stroke="#7f9bb3" stroke-width="1.5" stroke-opacity="0.85" stroke-linejoin="round"/>
<polyline points="1622.7,500.4 1661.4,543.7 1689.6,600.1" fill="none" stroke="#7f9bb3" stroke-width="1.5" stroke-opacity="0.85" stroke-linejoin="round"/>
<polyline points="1527.5,391.5 1548.7,290.0" fill="none" stroke="#7f9bb3" stroke-width="1.5" stroke-opacity="0.85" stroke-linejoin="round"/>
<polyline points="1609.3,392.9 1619.1,290.0" fill="none" stroke="#7f9bb3" stroke-width="1.5" stroke-opacity="0.85" stroke-linejoin="round"/>
<polyline points="1670.2,393.2 1696.7,325.2 1767.1,307.6" fill="none" stroke="#7f9bb3" stroke-width="1.5" stroke-opacity="0.85" stroke-linejoin="round"/>
<polyline points="1737.2,379.9 1802.4,395.7 1869.0,430.9" fill="none" stroke="#7f9bb3" stroke-width="1.5" stroke-opacity="0.85" stroke-linejoin="round"/>
<polyline points="1677.8,615.8 1722.8,648.2 1759.2,679.6" fill="none" stroke="#7f9bb3" stroke-width="1.5" stroke-opacity="0.85" stroke-linejoin="round"/>
<polyline points="1759.2,679.6 1781.7,689.8 1825.0,750.5 1852.3,798.2" fill="none" stroke="#7f9bb3" stroke-width="1.5" stroke-opacity="0.85" stroke-linejoin="round"/>
<polyline points="1677.8,615.8 1756.9,583.4" fill="none" stroke="#7f9bb3" stroke-width="1.5" stroke-opacity="0.85" stroke-linejoin="round"/>
<polyline points="1498.8,686.7 1508.0,733.4 1524.7,776.7" fill="none" stroke="#7f9bb3" stroke-width="1.5" stroke-opacity="0.85" stroke-linejoin="round"/>
<polyline points="1640.9,580.0 1677.8,615.8" fill="none" stroke="#7f9bb3" stroke-width="1.5" stroke-opacity="0.85" stroke-linejoin="round"/>
<polyline points="1781.7,689.8 1869.0,648.2" fill="none" stroke="#7f9bb3" stroke-width="1.5" stroke-opacity="0.85" stroke-linejoin="round"/>
<polyline points="1756.9,583.4 1825.0,614.1 1869.0,631.1" fill="none" stroke="#7f9bb3" stroke-width="1.5" stroke-opacity="0.85" stroke-linejoin="round"/>
</g>
<polygon points="1058,381 1066,390 1076,404 1083,419 1079,420 1069,405 1059,395" fill="#62a9b8"/>
<polygon points="1390,341 1398,332 1410,326 1424,325 1427,328 1414,332 1402,337 1394,343" fill="#5ea8c4"/>
<polygon points="1591,381 1596,380 1599,392 1593,394" fill="#5ea8c4"/>
<polygon points="1510,352 1514,351 1515,366 1511,367" fill="#5ea8c4"/>
<polyline points="706,617 723,605 736,602 742,610 736,616 739,621 750,616 764,619 782,612 797,612 810,614 814,628 827,635 817,648 804,660 795,670 800,685 799,705 791,717 795,730 790,750 767,751 777,765 785,782 792,787 780,805 777,822 792,837 790,846 780,850 770,870 769,880" fill="none" stroke="#2b2b2b" stroke-width="1.6" stroke-linejoin="round"/>
<polyline points="1043,539 1045,545 1075,551 1080,558 1095,558 1107,565 1127,567 1141,567 1141,558 1159,560 1173,567 1182,581 1198,581 1202,588 1214,585 1227,588 1236,583 1250,581" fill="none" stroke="#2b2b2b" stroke-width="1.6" stroke-linejoin="round"/>
<polyline points="1412,290 1404,297 1390,309 1387,319 1390,329 1397,338 1389,343 1397,338 1419,329 1421,341 1424,353 1431,363 1421,368 1419,375 1428,385 1435,396 1435,406 1424,411 1412,416 1417,426 1429,440 1430,445 1423,456 1430,470 1448,477 1459,477 1455,487 1452,494" fill="none" stroke="#2b2b2b" stroke-width="1.6" stroke-linejoin="round"/>
<polyline points="1431,363 1455,358 1469,362 1479,348 1482,338 1489,328 1494,328 1494,338 1503,348 1513,355 1516,360 1516,367 1521,367 1523,363 1520,358 1525,346 1532,338 1532,326 1539,324 1540,333 1545,336 1554,334 1564,333 1567,341 1573,339 1567,328 1567,317 1576,316 1586,319 1584,307 1588,299 1585,290" fill="none" stroke="#2b2b2b" stroke-width="1.6" stroke-linejoin="round"/>
<polyline points="1588,299 1598,300 1602,304 1615,299 1627,290" fill="none" stroke="#2b2b2b" stroke-width="1.6" stroke-linejoin="round"/>
<polyline points="1661,290 1668,304 1697,318 1732,322 1757,325 1774,329 1795,322 1816,315 1820,304 1830,296" fill="none" stroke="#2b2b2b" stroke-width="1.6" stroke-linejoin="round"/>
<polyline points="1732,322 1721,336 1728,357 1732,375 1735,385" fill="none" stroke="#2b2b2b" stroke-width="1.6" stroke-linejoin="round"/>
<polyline points="1738,389 1753,389 1778,385 1788,392 1802,389 1806,378 1820,368 1835,372 1850,365 1869,362" fill="none" stroke="#2b2b2b" stroke-width="1.6" stroke-linejoin="round"/>
<polyline points="1869,400 1848,404 1827,413 1830,424 1830,438 1845,456 1859,477 1869,487" fill="none" stroke="#2b2b2b" stroke-width="1.6" stroke-linejoin="round"/>
<g font-family="Liberation Sans, sans-serif">
<text x="1024.5" y="328" font-size="11.5" font-weight="normal" font-style="normal" fill="#333" stroke="#fff" stroke-opacity="0.85" stroke-width="2.6" paint-order="stroke" stroke-linejoin="round" text-anchor="end">Les Sables-d'Olonne</text>
<circle cx="1029" cy="324" r="2.7" fill="#f4f4f4" stroke="#333" stroke-width="1.1"/>
<text x="1130" y="322" font-size="11.5" font-weight="normal" font-style="normal" fill="#333" stroke="#fff" stroke-opacity="0.85" stroke-width="2.6" paint-order="stroke" stroke-linejoin="round" text-anchor="start">Poitiers</text>
<circle cx="1126" cy="318" r="2.7" fill="#f4f4f4" stroke="#333" stroke-width="1.1"/>
<text x="1062" y="350" font-size="11.5" font-weight="normal" font-style="normal" fill="#333" stroke="#fff" stroke-opacity="0.85" stroke-width="2.6" paint-order="stroke" stroke-linejoin="round" text-anchor="start">La Rochelle</text>
<circle cx="1057" cy="346" r="2.7" fill="#f4f4f4" stroke="#333" stroke-width="1.1"/>
<text x="1246.5" y="374" font-size="11.5" font-weight="normal" font-style="normal" fill="#333" stroke="#fff" stroke-opacity="0.85" stroke-width="2.6" paint-order="stroke" stroke-linejoin="round" text-anchor="end">Clermont-Ferrand</text>
<circle cx="1251" cy="370" r="2.7" fill="#f4f4f4" stroke="#333" stroke-width="1.1"/>
<text x="1416" y="327" font-size="11.5" font-weight="normal" font-style="normal" fill="#333" stroke="#fff" stroke-opacity="0.85" stroke-width="2.6" paint-order="stroke" stroke-linejoin="round" text-anchor="start">Lausanne</text>
<circle cx="1412" cy="323" r="2.7" fill="#f4f4f4" stroke="#333" stroke-width="1.1"/>
<text x="1375" y="414" font-size="11.5" font-weight="normal" font-style="normal" fill="#333" stroke="#fff" stroke-opacity="0.85" stroke-width="2.6" paint-order="stroke" stroke-linejoin="round" text-anchor="start">Grenoble</text>
<circle cx="1370" cy="410" r="2.7" fill="#f4f4f4" stroke="#333" stroke-width="1.1"/>
<text x="1554" y="381" font-size="11.5" font-weight="normal" font-style="normal" fill="#333" stroke="#fff" stroke-opacity="0.85" stroke-width="2.6" paint-order="stroke" stroke-linejoin="round" text-anchor="start">Bergamo</text>
<circle cx="1550" cy="377" r="2.7" fill="#f4f4f4" stroke="#333" stroke-width="1.1"/>
<text x="1614" y="397" font-size="11.5" font-weight="normal" font-style="normal" fill="#333" stroke="#fff" stroke-opacity="0.85" stroke-width="2.6" paint-order="stroke" stroke-linejoin="round" text-anchor="start">Verona</text>
<circle cx="1610" cy="393" r="2.7" fill="#f4f4f4" stroke="#333" stroke-width="1.1"/>
<text x="1742" y="384" font-size="11.5" font-weight="normal" font-style="normal" fill="#333" stroke="#fff" stroke-opacity="0.85" stroke-width="2.6" paint-order="stroke" stroke-linejoin="round" text-anchor="start">Trieste</text>
<circle cx="1737" cy="380" r="2.7" fill="#f4f4f4" stroke="#333" stroke-width="1.1"/>
<text x="1744" y="434" font-size="11.5" font-weight="normal" font-style="normal" fill="#333" stroke="#fff" stroke-opacity="0.85" stroke-width="2.6" paint-order="stroke" stroke-linejoin="round" text-anchor="start">Pula</text>
<circle cx="1740" cy="430" r="2.7" fill="#f4f4f4" stroke="#333" stroke-width="1.1"/>
<text x="1807" y="482" font-size="11.5" font-weight="normal" font-style="normal" fill="#333" stroke="#fff" stroke-opacity="0.85" stroke-width="2.6" paint-order="stroke" stroke-linejoin="round" text-anchor="start">Zadar</text>
<circle cx="1803" cy="478" r="2.7" fill="#f4f4f4" stroke="#333" stroke-width="1.1"/>
<text x="1088" y="436" font-size="11.5" font-weight="normal" font-style="normal" fill="#333" stroke="#fff" stroke-opacity="0.85" stroke-width="2.6" paint-order="stroke" stroke-linejoin="round" text-anchor="start">Bordeaux</text>
<circle cx="1084" cy="432" r="2.7" fill="#f4f4f4" stroke="#333" stroke-width="1.1"/>
<text x="1334" y="493" font-size="11.5" font-weight="normal" font-style="normal" fill="#333" stroke="#fff" stroke-opacity="0.85" stroke-width="2.6" paint-order="stroke" stroke-linejoin="round" text-anchor="start">Avignon</text>
<circle cx="1329" cy="489" r="2.7" fill="#f4f4f4" stroke="#333" stroke-width="1.1"/>
<text x="1222" y="539" font-size="11.5" font-weight="normal" font-style="normal" fill="#333" stroke="#fff" stroke-opacity="0.85" stroke-width="2.6" paint-order="stroke" stroke-linejoin="round" text-anchor="start">Carcassonne</text>
<circle cx="1217" cy="535" r="2.7" fill="#f4f4f4" stroke="#333" stroke-width="1.1"/>
<text x="1247" y="572" font-size="11.5" font-weight="normal" font-style="normal" fill="#333" stroke="#fff" stroke-opacity="0.85" stroke-width="2.6" paint-order="stroke" stroke-linejoin="round" text-anchor="start">Perpignan</text>
<circle cx="1243" cy="568" r="2.7" fill="#f4f4f4" stroke="#333" stroke-width="1.1"/>
<text x="1575.5" y="438" font-size="11.5" font-weight="normal" font-style="normal" fill="#333" stroke="#fff" stroke-opacity="0.85" stroke-width="2.6" paint-order="stroke" stroke-linejoin="round" text-anchor="end">Parma</text>
<circle cx="1580" cy="434" r="2.7" fill="#f4f4f4" stroke="#333" stroke-width="1.1"/>
<text x="1761" y="585" font-size="11.5" font-weight="normal" font-style="normal" fill="#333" stroke="#fff" stroke-opacity="0.85" stroke-width="2.6" paint-order="stroke" stroke-linejoin="round" text-anchor="start">Pescara</text>
<circle cx="1757" cy="581" r="2.7" fill="#f4f4f4" stroke="#333" stroke-width="1.1"/>
<text x="1760.5" y="697" font-size="11.5" font-weight="normal" font-style="normal" fill="#333" stroke="#fff" stroke-opacity="0.85" stroke-width="2.6" paint-order="stroke" stroke-linejoin="round" text-anchor="end">Sorrento</text>
<circle cx="1765" cy="693" r="2.7" fill="#f4f4f4" stroke="#333" stroke-width="1.1"/>
<text x="1786" y="694" font-size="11.5" font-weight="normal" font-style="normal" fill="#333" stroke="#fff" stroke-opacity="0.85" stroke-width="2.6" paint-order="stroke" stroke-linejoin="round" text-anchor="start">Salerno</text>
<circle cx="1782" cy="690" r="2.7" fill="#f4f4f4" stroke="#333" stroke-width="1.1"/>
<text x="1546" y="679" font-size="11.5" font-weight="normal" font-style="normal" fill="#333" stroke="#fff" stroke-opacity="0.85" stroke-width="2.6" paint-order="stroke" stroke-linejoin="round" text-anchor="start">Olbia</text>
<circle cx="1542" cy="675" r="2.7" fill="#f4f4f4" stroke="#333" stroke-width="1.1"/>
<text x="1504" y="691" font-size="11.5" font-weight="normal" font-style="normal" fill="#333" stroke="#fff" stroke-opacity="0.85" stroke-width="2.6" paint-order="stroke" stroke-linejoin="round" text-anchor="start">Sassari</text>
<circle cx="1499" cy="687" r="2.7" fill="#f4f4f4" stroke="#333" stroke-width="1.1"/>
<text x="1485.5" y="701" font-size="11.5" font-weight="normal" font-style="normal" fill="#333" stroke="#fff" stroke-opacity="0.85" stroke-width="2.6" paint-order="stroke" stroke-linejoin="round" text-anchor="end">Alghero</text>
<circle cx="1490" cy="697" r="2.7" fill="#f4f4f4" stroke="#333" stroke-width="1.1"/>
<text x="1529" y="781" font-size="11.5" font-weight="normal" font-style="normal" fill="#333" stroke="#fff" stroke-opacity="0.85" stroke-width="2.6" paint-order="stroke" stroke-linejoin="round" text-anchor="start">Cagliari</text>
<circle cx="1525" cy="777" r="2.7" fill="#f4f4f4" stroke="#333" stroke-width="1.1"/>
<text x="1676.5" y="851" font-size="11.5" font-weight="normal" font-style="normal" fill="#333" stroke="#fff" stroke-opacity="0.85" stroke-width="2.6" paint-order="stroke" stroke-linejoin="round" text-anchor="end">Trapani</text>
<circle cx="1681" cy="847" r="2.7" fill="#f4f4f4" stroke="#333" stroke-width="1.1"/>
<text x="1681" y="863" font-size="11.5" font-weight="normal" font-style="normal" fill="#333" stroke="#fff" stroke-opacity="0.85" stroke-width="2.6" paint-order="stroke" stroke-linejoin="round" text-anchor="start">Marsala</text>
<circle cx="1677" cy="859" r="2.7" fill="#f4f4f4" stroke="#333" stroke-width="1.1"/>
<text x="1834" y="533" font-size="11.5" font-weight="normal" font-style="normal" fill="#333" stroke="#fff" stroke-opacity="0.85" stroke-width="2.6" paint-order="stroke" stroke-linejoin="round" text-anchor="start">Makarska</text>
<text x="1862" y="520" font-size="11.5" font-weight="normal" font-style="normal" fill="#333" stroke="#fff" stroke-opacity="0.85" stroke-width="2.6" paint-order="stroke" stroke-linejoin="round" text-anchor="start">S</text>
<circle cx="1858" cy="516" r="2.7" fill="#f4f4f4" stroke="#333" stroke-width="1.1"/>
<text x="1024" y="526" font-size="11.5" font-weight="normal" font-style="normal" fill="#333" stroke="#fff" stroke-opacity="0.85" stroke-width="2.6" paint-order="stroke" stroke-linejoin="round" text-anchor="start">Donostia /</text>
<circle cx="1019" cy="522" r="2.7" fill="#f4f4f4" stroke="#333" stroke-width="1.1"/>
<text x="1024" y="537" font-size="11.5" font-weight="normal" font-style="normal" fill="#333" stroke="#fff" stroke-opacity="0.85" stroke-width="2.6" paint-order="stroke" stroke-linejoin="round" text-anchor="start">San Sebastián</text>
<text x="985.5" y="560" font-size="11.5" font-weight="normal" font-style="normal" fill="#333" stroke="#fff" stroke-opacity="0.85" stroke-width="2.6" paint-order="stroke" stroke-linejoin="round" text-anchor="end">Vitoria-Gasteiz</text>
<circle cx="990" cy="556" r="2.7" fill="#f4f4f4" stroke="#333" stroke-width="1.1"/>
<text x="1038" y="564" font-size="11.5" font-weight="normal" font-style="normal" fill="#333" stroke="#fff" stroke-opacity="0.85" stroke-width="2.6" paint-order="stroke" stroke-linejoin="round" text-anchor="start">Pamplona</text>
<circle cx="1033" cy="560" r="2.7" fill="#f4f4f4" stroke="#333" stroke-width="1.1"/>
<text x="856" y="518" font-size="11.5" font-weight="normal" font-style="normal" fill="#333" stroke="#fff" stroke-opacity="0.85" stroke-width="2.6" paint-order="stroke" stroke-linejoin="round" text-anchor="start">Gijón</text>
<circle cx="851" cy="514" r="2.7" fill="#f4f4f4" stroke="#333" stroke-width="1.1"/>
<text x="806" y="534" font-size="11.5" font-weight="normal" font-style="normal" fill="#333" stroke="#fff" stroke-opacity="0.85" stroke-width="2.6" paint-order="stroke" stroke-linejoin="round" text-anchor="start">Oviedo</text>
<text x="733" y="530" font-size="11.5" font-weight="normal" font-style="normal" fill="#333" stroke="#fff" stroke-opacity="0.85" stroke-width="2.6" paint-order="stroke" stroke-linejoin="round" text-anchor="start">A Coruña</text>
<circle cx="727" cy="526" r="2.7" fill="#f4f4f4" stroke="#333" stroke-width="1.1"/>
<text x="770" y="552" font-size="11.5" font-weight="normal" font-style="normal" fill="#333" stroke="#fff" stroke-opacity="0.85" stroke-width="2.6" paint-order="stroke" stroke-linejoin="round" text-anchor="start">Lugo</text>
<circle cx="765" cy="548" r="2.7" fill="#f4f4f4" stroke="#333" stroke-width="1.1"/>
<text x="659" y="554" font-size="11.5" font-weight="normal" font-style="normal" fill="#333" stroke="#fff" stroke-opacity="0.85" stroke-width="2.6" paint-order="stroke" stroke-linejoin="round" text-anchor="start">Santiago de</text>
<text x="716.5" y="565" font-size="11.5" font-weight="normal" font-style="normal" fill="#333" stroke="#fff" stroke-opacity="0.85" stroke-width="2.6" paint-order="stroke" stroke-linejoin="round" text-anchor="end">Compostela</text>
<circle cx="721" cy="561" r="2.7" fill="#f4f4f4" stroke="#333" stroke-width="1.1"/>
<text x="860" y="576" font-size="11.5" font-weight="normal" font-style="normal" fill="#333" stroke="#fff" stroke-opacity="0.85" stroke-width="2.6" paint-order="stroke" stroke-linejoin="round" text-anchor="start">León</text>
<circle cx="855" cy="572" r="2.7" fill="#f4f4f4" stroke="#333" stroke-width="1.1"/>
<text x="717" y="599" font-size="11.5" font-weight="normal" font-style="normal" fill="#333" stroke="#fff" stroke-opacity="0.85" stroke-width="2.6" paint-order="stroke" stroke-linejoin="round" text-anchor="start">Vigo</text>
<circle cx="712" cy="595" r="2.7" fill="#f4f4f4" stroke="#333" stroke-width="1.1"/>
<text x="732" y="642" font-size="11.5" font-weight="normal" font-style="normal" fill="#333" stroke="#fff" stroke-opacity="0.85" stroke-width="2.6" paint-order="stroke" stroke-linejoin="round" text-anchor="start">Braga</text>
<circle cx="727" cy="638" r="2.7" fill="#f4f4f4" stroke="#333" stroke-width="1.1"/>
<text x="721" y="696" font-size="11.5" font-weight="normal" font-style="normal" fill="#333" stroke="#fff" stroke-opacity="0.85" stroke-width="2.6" paint-order="stroke" stroke-linejoin="round" text-anchor="start">Aveiro</text>
<circle cx="716" cy="692" r="2.7" fill="#f4f4f4" stroke="#333" stroke-width="1.1"/>
<text x="729" y="722" font-size="11.5" font-weight="normal" font-style="normal" fill="#333" stroke="#fff" stroke-opacity="0.85" stroke-width="2.6" paint-order="stroke" stroke-linejoin="round" text-anchor="start">Coimbra</text>
<circle cx="724" cy="718" r="2.7" fill="#f4f4f4" stroke="#333" stroke-width="1.1"/>
<text x="679.5" y="805" font-size="11.5" font-weight="normal" font-style="normal" fill="#333" stroke="#fff" stroke-opacity="0.85" stroke-width="2.6" paint-order="stroke" stroke-linejoin="round" text-anchor="end">Sintra</text>
<circle cx="684" cy="801" r="2.7" fill="#f4f4f4" stroke="#333" stroke-width="1.1"/>
<text x="899" y="635" font-size="11.5" font-weight="normal" font-style="normal" fill="#333" stroke="#fff" stroke-opacity="0.85" stroke-width="2.6" paint-order="stroke" stroke-linejoin="round" text-anchor="start">Valladolid</text>
<circle cx="894" cy="631" r="2.7" fill="#f4f4f4" stroke="#333" stroke-width="1.1"/>
<text x="857" y="677" font-size="11.5" font-weight="normal" font-style="normal" fill="#333" stroke="#fff" stroke-opacity="0.85" stroke-width="2.6" paint-order="stroke" stroke-linejoin="round" text-anchor="start">Salamanca</text>
<circle cx="853" cy="673" r="2.7" fill="#f4f4f4" stroke="#333" stroke-width="1.1"/>
<text x="929" y="743" font-size="11.5" font-weight="normal" font-style="normal" fill="#333" stroke="#fff" stroke-opacity="0.85" stroke-width="2.6" paint-order="stroke" stroke-linejoin="round" text-anchor="start">Toledo</text>
<circle cx="924" cy="739" r="2.7" fill="#f4f4f4" stroke="#333" stroke-width="1.1"/>
<text x="1198.5" y="641" font-size="11.5" font-weight="normal" font-style="normal" fill="#333" stroke="#fff" stroke-opacity="0.85" stroke-width="2.6" paint-order="stroke" stroke-linejoin="round" text-anchor="end">Terrassa</text>
<circle cx="1203" cy="637" r="2.7" fill="#f4f4f4" stroke="#333" stroke-width="1.1"/>
<text x="1172" y="668" font-size="11.5" font-weight="normal" font-style="normal" fill="#333" stroke="#fff" stroke-opacity="0.85" stroke-width="2.6" paint-order="stroke" stroke-linejoin="round" text-anchor="start">Tarragona</text>
<circle cx="1167" cy="664" r="2.7" fill="#f4f4f4" stroke="#333" stroke-width="1.1"/>
<text x="1244" y="632" font-size="11.5" font-weight="normal" font-style="normal" fill="#333" stroke="#fff" stroke-opacity="0.85" stroke-width="2.6" paint-order="stroke" stroke-linejoin="round" text-anchor="start">Lloret de Mar</text>
<text x="1243" y="615" font-size="11.5" font-weight="normal" font-style="normal" fill="#333" stroke="#fff" stroke-opacity="0.85" stroke-width="2.6" paint-order="stroke" stroke-linejoin="round" text-anchor="start">Girona</text>
<text x="1030" y="793" font-size="11.5" font-weight="normal" font-style="normal" fill="#333" stroke="#fff" stroke-opacity="0.85" stroke-width="2.6" paint-order="stroke" stroke-linejoin="round" text-anchor="start">Albacete</text>
<circle cx="1027" cy="789" r="2.7" fill="#f4f4f4" stroke="#333" stroke-width="1.1"/>
<text x="1117" y="803" font-size="11.5" font-weight="normal" font-style="normal" fill="#333" stroke="#fff" stroke-opacity="0.85" stroke-width="2.6" paint-order="stroke" stroke-linejoin="round" text-anchor="start">Dénia</text>
<text x="1093" y="832" font-size="11.5" font-weight="normal" font-style="normal" fill="#333" stroke="#fff" stroke-opacity="0.85" stroke-width="2.6" paint-order="stroke" stroke-linejoin="round" text-anchor="start">Alicante</text>
<text x="1175" y="799" font-size="11.5" font-weight="normal" font-style="normal" fill="#333" stroke="#fff" stroke-opacity="0.85" stroke-width="2.6" paint-order="stroke" stroke-linejoin="round" text-anchor="start">Ibiza</text>
<text x="1229" y="761" font-size="11.5" font-weight="normal" font-style="normal" fill="#333" stroke="#fff" stroke-opacity="0.85" stroke-width="2.6" paint-order="stroke" stroke-linejoin="round" text-anchor="start">Mallorca</text>
<text x="891" y="857" font-size="11.5" font-weight="normal" font-style="normal" fill="#333" stroke="#fff" stroke-opacity="0.85" stroke-width="2.6" paint-order="stroke" stroke-linejoin="round" text-anchor="start">Córdoba</text>
<circle cx="887" cy="853" r="2.7" fill="#f4f4f4" stroke="#333" stroke-width="1.1"/>
<text x="0" y="866" font-size="11.5" font-weight="normal" font-style="normal" fill="#333" stroke="#fff" stroke-opacity="0.85" stroke-width="2.6" paint-order="stroke" stroke-linejoin="round" text-anchor="start">ada</text>
<text x="1731" y="873" font-size="11.5" font-weight="normal" font-style="italic" fill="#333" stroke="#fff" stroke-opacity="0.85" stroke-width="2.6" paint-order="stroke" stroke-linejoin="round" text-anchor="start">Sicilia</text>
<text x="1497" y="727" font-size="11.5" font-weight="normal" font-style="italic" fill="#333" stroke="#fff" stroke-opacity="0.85" stroke-width="2.6" paint-order="stroke" stroke-linejoin="round" text-anchor="start">Sardegna</text>
<text x="1506" y="612" font-size="11.5" font-weight="normal" font-style="italic" fill="#333" stroke="#fff" stroke-opacity="0.85" stroke-width="2.6" paint-order="stroke" stroke-linejoin="round" text-anchor="start">Corse</text>
<text x="1336" y="377" font-size="14" font-weight="normal" font-style="normal" fill="#222" stroke="#fff" stroke-opacity="0.85" stroke-width="2.6" paint-order="stroke" stroke-linejoin="round" text-anchor="start">Lyon</text>
<circle cx="1330" cy="372" r="3.4" fill="#f4f4f4" stroke="#222" stroke-width="1.4"/>
<text x="1385" y="348" font-size="14" font-weight="normal" font-style="normal" fill="#222" stroke="#fff" stroke-opacity="0.85" stroke-width="2.6" paint-order="stroke" stroke-linejoin="round" text-anchor="end">Geneva</text>
<circle cx="1390" cy="343" r="3.4" fill="#f4f4f4" stroke="#222" stroke-width="1.4"/>
<text x="1465" y="422" font-size="14" font-weight="normal" font-style="normal" fill="#222" stroke="#fff" stroke-opacity="0.85" stroke-width="2.6" paint-order="stroke" stroke-linejoin="round" text-anchor="start">Turin</text>
<circle cx="1459" cy="417" r="3.4" fill="#f4f4f4" stroke="#222" stroke-width="1.4"/>
<text x="1532" y="396" font-size="14" font-weight="normal" font-style="normal" fill="#222" stroke="#fff" stroke-opacity="0.85" stroke-width="2.6" paint-order="stroke" stroke-linejoin="round" text-anchor="start">Milan</text>
<circle cx="1527" cy="391" r="3.4" fill="#f4f4f4" stroke="#222" stroke-width="1.4"/>
<text x="1674" y="398" font-size="14" font-weight="normal" font-style="normal" fill="#222" stroke="#fff" stroke-opacity="0.85" stroke-width="2.6" paint-order="stroke" stroke-linejoin="round" text-anchor="start">Venice</text>
<circle cx="1669" cy="393" r="3.4" fill="#f4f4f4" stroke="#222" stroke-width="1.4"/>
<text x="1180" y="515" font-size="14" font-weight="normal" font-style="normal" fill="#222" stroke="#fff" stroke-opacity="0.85" stroke-width="2.6" paint-order="stroke" stroke-linejoin="round" text-anchor="start">Toulouse</text>
<circle cx="1175" cy="510" r="3.4" fill="#f4f4f4" stroke="#222" stroke-width="1.4"/>
<text x="1291" y="515" font-size="14" font-weight="normal" font-style="normal" fill="#222" stroke="#fff" stroke-opacity="0.85" stroke-width="2.6" paint-order="stroke" stroke-linejoin="round" text-anchor="start">Montpellier</text>
<circle cx="1286" cy="510" r="3.4" fill="#f4f4f4" stroke="#222" stroke-width="1.4"/>
<text x="1359" y="534" font-size="14" font-weight="normal" font-style="normal" fill="#222" stroke="#fff" stroke-opacity="0.85" stroke-width="2.6" paint-order="stroke" stroke-linejoin="round" text-anchor="start">Marseille</text>
<circle cx="1354" cy="529" r="3.4" fill="#f4f4f4" stroke="#222" stroke-width="1.4"/>
<text x="1521" y="465" font-size="14" font-weight="normal" font-style="normal" fill="#222" stroke="#fff" stroke-opacity="0.85" stroke-width="2.6" paint-order="stroke" stroke-linejoin="round" text-anchor="start">Genoa</text>
<circle cx="1516" cy="460" r="3.4" fill="#f4f4f4" stroke="#222" stroke-width="1.4"/>
<text x="1631" y="459" font-size="14" font-weight="normal" font-style="normal" fill="#222" stroke="#fff" stroke-opacity="0.85" stroke-width="2.6" paint-order="stroke" stroke-linejoin="round" text-anchor="start">Bologna</text>
<circle cx="1627" cy="454" r="3.4" fill="#f4f4f4" stroke="#222" stroke-width="1.4"/>
<text x="1619" y="505" font-size="14" font-weight="normal" font-style="normal" fill="#222" stroke="#fff" stroke-opacity="0.85" stroke-width="2.6" paint-order="stroke" stroke-linejoin="round" text-anchor="end">Florence</text>
<circle cx="1624" cy="500" r="3.4" fill="#f4f4f4" stroke="#222" stroke-width="1.4"/>
<text x="1683" y="621" font-size="14" font-weight="normal" font-style="normal" fill="#222" stroke="#fff" stroke-opacity="0.85" stroke-width="2.6" paint-order="stroke" stroke-linejoin="round" text-anchor="start">Rome</text>
<circle cx="1678" cy="616" r="4" fill="#fff" stroke="#222" stroke-width="1.5"/><circle cx="1678" cy="616" r="1.8" fill="#222"/>
<text x="1754" y="686" font-size="14" font-weight="normal" font-style="normal" fill="#222" stroke="#fff" stroke-opacity="0.85" stroke-width="2.6" paint-order="stroke" stroke-linejoin="round" text-anchor="end">Naples</text>
<circle cx="1759" cy="681" r="3.4" fill="#f4f4f4" stroke="#222" stroke-width="1.4"/>
<text x="1723" y="847" font-size="14" font-weight="normal" font-style="normal" fill="#222" stroke="#fff" stroke-opacity="0.85" stroke-width="2.6" paint-order="stroke" stroke-linejoin="round" text-anchor="start">Palermo</text>
<circle cx="1718" cy="842" r="3.4" fill="#f4f4f4" stroke="#222" stroke-width="1.4"/>
<text x="970" y="537" font-size="14" font-weight="normal" font-style="normal" fill="#222" stroke="#fff" stroke-opacity="0.85" stroke-width="2.6" paint-order="stroke" stroke-linejoin="round" text-anchor="end">Bilbao</text>
<circle cx="975" cy="532" r="3.4" fill="#f4f4f4" stroke="#222" stroke-width="1.4"/>
<text x="722" y="666" font-size="14" font-weight="normal" font-style="normal" fill="#222" stroke="#fff" stroke-opacity="0.85" stroke-width="2.6" paint-order="stroke" stroke-linejoin="round" text-anchor="start">Porto</text>
<circle cx="717" cy="661" r="3.4" fill="#f4f4f4" stroke="#222" stroke-width="1.4"/>
<text x="699" y="811" font-size="14" font-weight="normal" font-style="normal" fill="#222" stroke="#fff" stroke-opacity="0.85" stroke-width="2.6" paint-order="stroke" stroke-linejoin="round" text-anchor="start">Lisbon</text>
<circle cx="694" cy="806" r="4" fill="#fff" stroke="#222" stroke-width="1.5"/><circle cx="694" cy="806" r="1.8" fill="#222"/>
<text x="946" y="711" font-size="14" font-weight="normal" font-style="normal" fill="#222" stroke="#fff" stroke-opacity="0.85" stroke-width="2.6" paint-order="stroke" stroke-linejoin="round" text-anchor="start">Madrid</text>
<circle cx="941" cy="706" r="4" fill="#fff" stroke="#222" stroke-width="1.5"/><circle cx="941" cy="706" r="1.8" fill="#222"/>
<text x="1074" y="637" font-size="14" font-weight="normal" font-style="normal" fill="#222" stroke="#fff" stroke-opacity="0.85" stroke-width="2.6" paint-order="stroke" stroke-linejoin="round" text-anchor="start">Zaragoza</text>
<circle cx="1069" cy="632" r="3.4" fill="#f4f4f4" stroke="#222" stroke-width="1.4"/>
<text x="1213" y="652" font-size="14" font-weight="normal" font-style="normal" fill="#222" stroke="#fff" stroke-opacity="0.85" stroke-width="2.6" paint-order="stroke" stroke-linejoin="round" text-anchor="start">Barcelona</text>
<circle cx="1208" cy="647" r="3.4" fill="#f4f4f4" stroke="#222" stroke-width="1.4"/>
<text x="1098" y="767" font-size="14" font-weight="normal" font-style="normal" fill="#222" stroke="#fff" stroke-opacity="0.85" stroke-width="2.6" paint-order="stroke" stroke-linejoin="round" text-anchor="start">Valencia</text>
<circle cx="1093" cy="762" r="3.4" fill="#f4f4f4" stroke="#222" stroke-width="1.4"/>
<text x="1063" y="853" font-size="14" font-weight="normal" font-style="normal" fill="#222" stroke="#fff" stroke-opacity="0.85" stroke-width="2.6" paint-order="stroke" stroke-linejoin="round" text-anchor="start">Murcia</text>
<text x="1194" y="321" font-size="16" font-weight="bold" font-style="normal" fill="#1e1e1e" stroke="#fff" stroke-opacity="0.85" stroke-width="2.6" paint-order="stroke" stroke-linejoin="round" text-anchor="start">France</text>
<text x="937" y="766" font-size="16" font-weight="bold" font-style="normal" fill="#1e1e1e" stroke="#fff" stroke-opacity="0.85" stroke-width="2.6" paint-order="stroke" stroke-linejoin="round" text-anchor="start">Spain</text>
<text x="684" y="755" font-size="16" font-weight="bold" font-style="normal" fill="#1e1e1e" stroke="#fff" stroke-opacity="0.85" stroke-width="2.6" paint-order="stroke" stroke-linejoin="round" text-anchor="start">Portugal</text>
<text x="1149" y="582" font-size="16" font-weight="bold" font-style="normal" fill="#1e1e1e" stroke="#fff" stroke-opacity="0.85" stroke-width="2.6" paint-order="stroke" stroke-linejoin="round" text-anchor="start">Andorra</text>
<text x="1416" y="507" font-size="16" font-weight="bold" font-style="normal" fill="#1e1e1e" stroke="#fff" stroke-opacity="0.85" stroke-width="2.6" paint-order="stroke" stroke-linejoin="round" text-anchor="start">Monaco</text>
<text x="1424" y="310" font-size="16" font-weight="bold" font-style="normal" fill="#1e1e1e" stroke="#fff" stroke-opacity="0.85" stroke-width="2.6" paint-order="stroke" stroke-linejoin="round" text-anchor="start">Switzerland</text>
<text x="1742" y="359" font-size="16" font-weight="bold" font-style="normal" fill="#1e1e1e" stroke="#fff" stroke-opacity="0.85" stroke-width="2.6" paint-order="stroke" stroke-linejoin="round" text-anchor="start">Slovenia</text>
<text x="1754" y="421" font-size="16" font-weight="bold" font-style="normal" fill="#1e1e1e" stroke="#fff" stroke-opacity="0.85" stroke-width="2.6" paint-order="stroke" stroke-linejoin="round" text-anchor="start">Croatia</text>
<text x="1660" y="554" font-size="16" font-weight="bold" font-style="normal" fill="#1e1e1e" stroke="#fff" stroke-opacity="0.85" stroke-width="2.6" paint-order="stroke" stroke-linejoin="round" text-anchor="start">Italy</text>
<text x="1638" y="495" font-size="16" font-weight="bold" font-style="normal" fill="#1e1e1e" stroke="#fff" stroke-opacity="0.85" stroke-width="2.6" paint-order="stroke" stroke-linejoin="round" text-anchor="start">San Marino</text>
<text x="913" y="392" font-size="11.5" font-weight="normal" font-style="normal" fill="#1c7a8a" transform="rotate(18 913 392)" text-anchor="start">Bay of Biscay</text>
<text x="1172" y="745" font-size="11.5" font-weight="normal" font-style="normal" fill="#1c7a8a" transform="rotate(-48 1172 745)" text-anchor="start">Balearic Sea</text>
<text x="1590" y="730" font-size="11.5" font-weight="normal" font-style="normal" fill="#1c7a8a" text-anchor="start">Tyrrhenian Sea</text>
<text x="1806" y="564" font-size="11.5" font-weight="normal" font-style="normal" fill="#1c7a8a" transform="rotate(28 1806 564)" text-anchor="start">Adriatic Sea</text>
</g>
<g fill="#d99b2f" stroke="#f3e2c4" stroke-width="0.9">
<circle cx="727" cy="519" r="4.6"/>
<circle cx="731" cy="520" r="4.6"/>
<circle cx="815" cy="510" r="4.6"/>
<circle cx="830" cy="507" r="4.6"/>
<circle cx="837" cy="508" r="4.6"/>
<circle cx="832" cy="515" r="4.6"/>
<circle cx="825" cy="517" r="4.6"/>
<circle cx="835" cy="519" r="4.6"/>
<circle cx="839" cy="522" r="4.6"/>
<circle cx="844" cy="525" r="4.6"/>
<circle cx="826" cy="537" r="4.6"/>
<circle cx="854" cy="535" r="4.6"/>
<circle cx="833" cy="512" r="4.6"/>
<circle cx="836" cy="514" r="4.6"/>
<circle cx="838" cy="517" r="4.6"/>
<circle cx="937" cy="513" r="4.6"/>
<circle cx="916" cy="534" r="4.6"/>
<circle cx="977" cy="526" r="4.6"/>
<circle cx="981" cy="528" r="4.6"/>
<circle cx="986" cy="516" r="4.6"/>
<circle cx="1091" cy="595" r="4.6"/>
<circle cx="714" cy="653" r="4.6"/>
<circle cx="718" cy="658" r="4.6"/>
<circle cx="852" cy="664" r="4.6"/>
<circle cx="853" cy="669" r="4.6"/>
<circle cx="916" cy="669" r="4.6"/>
<circle cx="950" cy="675" r="4.6"/>
<circle cx="960" cy="673" r="4.6"/>
<circle cx="897" cy="685" r="4.6"/>
<circle cx="862" cy="693" r="4.6"/>
<circle cx="868" cy="698" r="4.6"/>
<circle cx="931" cy="690" r="4.6"/>
<circle cx="935" cy="699" r="4.6"/>
<circle cx="943" cy="698" r="4.6"/>
<circle cx="966" cy="689" r="4.6"/>
<circle cx="1031" cy="692" r="4.6"/>
<circle cx="928" cy="724" r="4.6"/>
<circle cx="985" cy="755" r="4.6"/>
<circle cx="824" cy="757" r="4.6"/>
<circle cx="827" cy="794" r="4.6"/>
<circle cx="970" cy="821" r="4.6"/>
<circle cx="989" cy="824" r="4.6"/>
<circle cx="1005" cy="833" r="4.6"/>
<circle cx="1015" cy="832" r="4.6"/>
<circle cx="1031" cy="831" r="4.6"/>
<circle cx="911" cy="840" r="4.6"/>
<circle cx="927" cy="844" r="4.6"/>
<circle cx="893" cy="848" r="4.6"/>
<circle cx="882" cy="853" r="4.6"/>
<circle cx="858" cy="861" r="4.6"/>
<circle cx="838" cy="877" r="4.6"/>
<circle cx="1008" cy="854" r="4.6"/>
<circle cx="990" cy="850" r="4.6"/>
<circle cx="1254" cy="580" r="4.6"/>
<circle cx="1251" cy="589" r="4.6"/>
<circle cx="1256" cy="589" r="4.6"/>
<circle cx="1239" cy="606" r="4.6"/>
<circle cx="1256" cy="607" r="4.6"/>
<circle cx="1238" cy="614" r="4.6"/>
<circle cx="1244" cy="614" r="4.6"/>
<circle cx="1254" cy="612" r="4.6"/>
<circle cx="1248" cy="618" r="4.6"/>
<circle cx="1236" cy="624" r="4.6"/>
<circle cx="1227" cy="628" r="4.6"/>
<circle cx="1220" cy="631" r="4.6"/>
<circle cx="1214" cy="636" r="4.6"/>
<circle cx="1207" cy="640" r="4.6"/>
<circle cx="1202" cy="632" r="4.6"/>
<circle cx="1208" cy="641" r="4.6"/>
<circle cx="1208" cy="643" r="4.6"/>
<circle cx="1193" cy="650" r="4.6"/>
<circle cx="1157" cy="661" r="4.6"/>
<circle cx="1070" cy="846" r="4.6"/>
<circle cx="1075" cy="851" r="4.6"/>
<circle cx="1066" cy="842" r="4.6"/>
<circle cx="1072" cy="856" r="4.6"/>
<circle cx="1212" cy="634" r="4.6"/>
<circle cx="1218" cy="631" r="4.6"/>
<circle cx="1224" cy="628" r="4.6"/>
<circle cx="1230" cy="626" r="4.6"/>
<circle cx="1207" cy="645" r="4.6"/>
<circle cx="1203" cy="637" r="4.6"/>
<circle cx="1233" cy="621" r="4.6"/>
<circle cx="1240" cy="618" r="4.6"/>
<circle cx="1247" cy="602" r="4.6"/>
<circle cx="1109" cy="727" r="4.6"/>
<circle cx="1096" cy="747" r="4.6"/>
<circle cx="1085" cy="750" r="4.6"/>
<circle cx="1093" cy="756" r="4.6"/>
<circle cx="1078" cy="764" r="4.6"/>
<circle cx="1082" cy="762" r="4.6"/>
<circle cx="1063" cy="780" r="4.6"/>
<circle cx="1060" cy="790" r="4.6"/>
<circle cx="1081" cy="793" r="4.6"/>
<circle cx="1101" cy="784" r="4.6"/>
<circle cx="1103" cy="789" r="4.6"/>
<circle cx="1170" cy="788" r="4.6"/>
<circle cx="1178" cy="788" r="4.6"/>
<circle cx="1173" cy="801" r="4.6"/>
<circle cx="1181" cy="803" r="4.6"/>
<circle cx="1176" cy="796" r="4.6"/>
<circle cx="1143" cy="837" r="4.6"/>
<circle cx="1187" cy="866" r="4.6"/>
<circle cx="1289" cy="869" r="4.6"/>
<circle cx="1298" cy="862" r="4.6"/>
<circle cx="1331" cy="863" r="4.6"/>
<circle cx="1299" cy="880" r="4.6"/>
<circle cx="1309" cy="880" r="4.6"/>
<circle cx="1774" cy="412" r="4.6"/>
<circle cx="1285" cy="727" r="4.6"/>
<circle cx="1294" cy="728" r="4.6"/>
<circle cx="1299" cy="721" r="4.6"/>
<circle cx="1304" cy="730" r="4.6"/>
<circle cx="1302" cy="735" r="4.6"/>
<circle cx="1297" cy="724" r="4.6"/>
<circle cx="1300" cy="732" r="4.6"/>
<circle cx="1233.5" cy="734.3" r="4.6"/>
<circle cx="1252.1" cy="731.0" r="4.6"/>
<circle cx="1245.5" cy="743.4" r="4.6"/>
<circle cx="1218.3" cy="749.3" r="4.6"/>
<circle cx="1239.2" cy="762.7" r="4.6"/>
<circle cx="1250.8" cy="767.8" r="4.6"/>
<circle cx="1247.9" cy="744.7" r="4.6"/>
<circle cx="1263.9" cy="740.2" r="4.6"/>
<circle cx="1232.6" cy="762.3" r="4.6"/>
<circle cx="1225.3" cy="752.4" r="4.6"/>
<circle cx="1251.4" cy="743.6" r="4.6"/>
<circle cx="1246.2" cy="730.6" r="4.6"/>
<circle cx="1253.8" cy="746.0" r="4.6"/>
<circle cx="1232.9" cy="752.6" r="4.6"/>
<circle cx="1240.8" cy="740.6" r="4.6"/>
<circle cx="1260.3" cy="757.4" r="4.6"/>
<circle cx="1228.9" cy="752.1" r="4.6"/>
<circle cx="1244.9" cy="764.8" r="4.6"/>
<circle cx="1256.6" cy="740.1" r="4.6"/>
<circle cx="1238.8" cy="759.8" r="4.6"/>
<circle cx="1223.7" cy="748.5" r="4.6"/>
<circle cx="1258.6" cy="752.1" r="4.6"/>
<circle cx="1264.9" cy="741.2" r="4.6"/>
<circle cx="1254.6" cy="753.0" r="4.6"/>
<circle cx="1248.1" cy="747.2" r="4.6"/>
<circle cx="1262.9" cy="767.7" r="4.6"/>
<circle cx="1242.0" cy="755.9" r="4.6"/>
<circle cx="1218.5" cy="757.5" r="4.6"/>
<circle cx="1251.9" cy="769.7" r="4.6"/>
<circle cx="1261.8" cy="740.0" r="4.6"/>
<circle cx="1237.0" cy="756.1" r="4.6"/>
<circle cx="1237.3" cy="764.6" r="4.6"/>
<circle cx="1219.6" cy="746.9" r="4.6"/>
<circle cx="1246.3" cy="765.1" r="4.6"/>
<circle cx="1261.7" cy="764.3" r="4.6"/>
<circle cx="1230.9" cy="745.4" r="4.6"/>
<circle cx="1228.3" cy="748.4" r="4.6"/>
<circle cx="1248.6" cy="739.0" r="4.6"/>
<circle cx="1236.0" cy="751.8" r="4.6"/>
<circle cx="1269.3" cy="757.0" r="4.6"/>
<circle cx="1244.4" cy="753.9" r="4.6"/>
<circle cx="1253.5" cy="730.3" r="4.6"/>
<circle cx="1266.3" cy="760.8" r="4.6"/>
<circle cx="1264.8" cy="761.5" r="4.6"/>
<circle cx="1237.4" cy="744.8" r="4.6"/>
<circle cx="1042.1" cy="846.4" r="4.6"/>
<circle cx="1072.2" cy="801.7" r="4.6"/>
<circle cx="1050.9" cy="820.0" r="4.6"/>
<circle cx="1057.5" cy="799.3" r="4.6"/>
<circle cx="1063.5" cy="832.5" r="4.6"/>
<circle cx="1056.2" cy="812.4" r="4.6"/>
<circle cx="1067.2" cy="801.5" r="4.6"/>
<circle cx="1051.4" cy="821.7" r="4.6"/>
<circle cx="1045.9" cy="859.0" r="4.6"/>
<circle cx="1067.4" cy="859.7" r="4.6"/>
<circle cx="1055.5" cy="808.5" r="4.6"/>
<circle cx="1084.3" cy="856.1" r="4.6"/>
<circle cx="1049.4" cy="835.6" r="4.6"/>
<circle cx="1051.3" cy="851.7" r="4.6"/>
<circle cx="1072.8" cy="870.8" r="4.6"/>
<circle cx="1085.6" cy="832.1" r="4.6"/>
<circle cx="1074.5" cy="861.6" r="4.6"/>
<circle cx="1041.0" cy="848.8" r="4.6"/>
<circle cx="1080.3" cy="832.0" r="4.6"/>
<circle cx="1046.5" cy="860.6" r="4.6"/>
<circle cx="1055.6" cy="861.7" r="4.6"/>
<circle cx="1078.8" cy="803.6" r="4.6"/>
<circle cx="1044.6" cy="864.0" r="4.6"/>
<circle cx="1056.7" cy="838.5" r="4.6"/>
<circle cx="1067.1" cy="873.9" r="4.6"/>
<circle cx="1061.6" cy="868.2" r="4.6"/>
<circle cx="1084.7" cy="807.4" r="4.6"/>
<circle cx="1050.2" cy="842.0" r="4.6"/>
<circle cx="1051.3" cy="826.5" r="4.6"/>
<circle cx="1043.7" cy="871.7" r="4.6"/>
<circle cx="1056.9" cy="830.2" r="4.6"/>
<circle cx="1070.4" cy="871.2" r="4.6"/>
<circle cx="1060.8" cy="872.4" r="4.6"/>
<circle cx="1065.6" cy="836.9" r="4.6"/>
<circle cx="1062.0" cy="804.8" r="4.6"/>
<circle cx="1078.8" cy="839.2" r="4.6"/>
<circle cx="1055.2" cy="835.7" r="4.6"/>
<circle cx="1068.8" cy="860.2" r="4.6"/>
<circle cx="1081.6" cy="834.7" r="4.6"/>
<circle cx="1069.1" cy="857.9" r="4.6"/>
<circle cx="1072.1" cy="834.5" r="4.6"/>
<circle cx="1066.2" cy="851.7" r="4.6"/>
<circle cx="1062.7" cy="837.1" r="4.6"/>
<circle cx="1064.2" cy="874.6" r="4.6"/>
<circle cx="1077.3" cy="868.6" r="4.6"/>
<circle cx="1091.6" cy="811.9" r="4.6"/>
<circle cx="1069.0" cy="874.8" r="4.6"/>
<circle cx="1040.3" cy="849.6" r="4.6"/>
<circle cx="1045.1" cy="853.9" r="4.6"/>
<circle cx="1075.0" cy="801.2" r="4.6"/>
<circle cx="1059.5" cy="832.8" r="4.6"/>
<circle cx="1066.4" cy="819.2" r="4.6"/>
<circle cx="1068.7" cy="828.5" r="4.6"/>
<circle cx="1072.8" cy="835.1" r="4.6"/>
<circle cx="1060.9" cy="871.9" r="4.6"/>
<circle cx="1084.3" cy="811.8" r="4.6"/>
<circle cx="1044.8" cy="872.6" r="4.6"/>
<circle cx="1069.7" cy="852.4" r="4.6"/>
<circle cx="1076.6" cy="827.1" r="4.6"/>
<circle cx="1040.3" cy="874.3" r="4.6"/>
<circle cx="1073.4" cy="861.7" r="4.6"/>
<circle cx="1040.9" cy="866.8" r="4.6"/>
<circle cx="1039.9" cy="867.4" r="4.6"/>
<circle cx="1062.8" cy="819.2" r="4.6"/>
<circle cx="1068.6" cy="873.3" r="4.6"/>
<circle cx="1067.1" cy="809.9" r="4.6"/>
<circle cx="1054.4" cy="816.1" r="4.6"/>
<circle cx="1080.8" cy="814.7" r="4.6"/>
<circle cx="1065.5" cy="804.4" r="4.6"/>
<circle cx="1079.3" cy="838.7" r="4.6"/>
<circle cx="1084.3" cy="827.8" r="4.6"/>
<circle cx="1065.2" cy="864.8" r="4.6"/>
<circle cx="1059.2" cy="834.6" r="4.6"/>
<circle cx="1056.2" cy="864.6" r="4.6"/>
<circle cx="1077.7" cy="846.5" r="4.6"/>
<circle cx="1059.9" cy="820.0" r="4.6"/>
<circle cx="1040.2" cy="856.2" r="4.6"/>
<circle cx="1041.0" cy="865.4" r="4.6"/>
<circle cx="1052.6" cy="810.3" r="4.6"/>
<circle cx="1053.3" cy="830.3" r="4.6"/>
<circle cx="1054.3" cy="820.8" r="4.6"/>
<circle cx="1064.0" cy="834.3" r="4.6"/>
<circle cx="1047.9" cy="834.4" r="4.6"/>
<circle cx="1054.0" cy="809.4" r="4.6"/>
<circle cx="1070.5" cy="836.7" r="4.6"/>
<circle cx="1080.3" cy="848.5" r="4.6"/>
<circle cx="1078.2" cy="868.9" r="4.6"/>
<circle cx="1059.0" cy="818.0" r="4.6"/>
<circle cx="1078.7" cy="847.2" r="4.6"/>
<circle cx="1079.3" cy="862.7" r="4.6"/>
<circle cx="1065.8" cy="864.8" r="4.6"/>
<circle cx="1070.5" cy="870.1" r="4.6"/>
<circle cx="1076.3" cy="851.8" r="4.6"/>
<circle cx="1042.2" cy="864.9" r="4.6"/>
<circle cx="1069.0" cy="845.8" r="4.6"/>
<circle cx="1072.9" cy="850.6" r="4.6"/>
<circle cx="1083.1" cy="856.8" r="4.6"/>
<circle cx="1065.7" cy="837.2" r="4.6"/>
<circle cx="1074.9" cy="794.1" r="4.6"/>
<circle cx="1079.5" cy="811.2" r="4.6"/>
<circle cx="1079.0" cy="806.9" r="4.6"/>
<circle cx="1065.1" cy="823.2" r="4.6"/>
<circle cx="1064.3" cy="850.9" r="4.6"/>
<circle cx="1081.3" cy="844.8" r="4.6"/>
<circle cx="1073.9" cy="795.1" r="4.6"/>
<circle cx="1079.8" cy="816.0" r="4.6"/>
<circle cx="1075.6" cy="851.7" r="4.6"/>
<circle cx="1075.9" cy="814.8" r="4.6"/>
<circle cx="1066.5" cy="830.7" r="4.6"/>
<circle cx="1063.5" cy="798.9" r="4.6"/>
<circle cx="1062.5" cy="812.7" r="4.6"/>
<circle cx="1048.4" cy="875.0" r="4.6"/>
<circle cx="1048.4" cy="841.5" r="4.6"/>
<circle cx="1084.4" cy="834.8" r="4.6"/>
<circle cx="1049.7" cy="870.6" r="4.6"/>
<circle cx="1062.6" cy="815.8" r="4.6"/>
<circle cx="1054.6" cy="865.3" r="4.6"/>
<circle cx="1089.2" cy="814.7" r="4.6"/>
<circle cx="1058.0" cy="824.1" r="4.6"/>
<circle cx="1057.3" cy="827.4" r="4.6"/>
<circle cx="976.7" cy="873.7" r="4.6"/>
<circle cx="997.8" cy="877.6" r="4.6"/>
<circle cx="993.7" cy="852.1" r="4.6"/>
<circle cx="1023.8" cy="849.2" r="4.6"/>
<circle cx="1007.9" cy="878.3" r="4.6"/>
<circle cx="1066.7" cy="872.9" r="4.6"/>
<circle cx="1037.6" cy="876.7" r="4.6"/>
<circle cx="1049.2" cy="859.1" r="4.6"/>
<circle cx="1051.6" cy="866.5" r="4.6"/>
<circle cx="1019.3" cy="855.1" r="4.6"/>
<circle cx="999.2" cy="870.1" r="4.6"/>
<circle cx="1040.4" cy="853.4" r="4.6"/>
<circle cx="1029.1" cy="857.0" r="4.6"/>
<circle cx="984.2" cy="848.1" r="4.6"/>
<circle cx="988.9" cy="876.4" r="4.6"/>
<circle cx="1022.2" cy="850.4" r="4.6"/>
<circle cx="1069.2" cy="879.9" r="4.6"/>
<circle cx="1016.7" cy="847.3" r="4.6"/>
<circle cx="992.5" cy="851.8" r="4.6"/>
<circle cx="1030.5" cy="875.7" r="4.6"/>
<circle cx="1051.2" cy="857.7" r="4.6"/>
<circle cx="1012.6" cy="861.9" r="4.6"/>
<circle cx="1008.3" cy="854.9" r="4.6"/>
<circle cx="972.1" cy="852.5" r="4.6"/>
<circle cx="1022.9" cy="865.9" r="4.6"/>
<circle cx="996.2" cy="851.4" r="4.6"/>
<circle cx="1011.0" cy="858.9" r="4.6"/>
<circle cx="1074.7" cy="874.2" r="4.6"/>
<circle cx="1010.0" cy="877.2" r="4.6"/>
<circle cx="1059.9" cy="874.5" r="4.6"/>
<circle cx="1025.1" cy="867.9" r="4.6"/>
<circle cx="1073.3" cy="869.4" r="4.6"/>
<circle cx="1039.4" cy="871.1" r="4.6"/>
<circle cx="1017.6" cy="863.0" r="4.6"/>
<circle cx="969.5" cy="871.7" r="4.6"/>
<circle cx="991.7" cy="877.0" r="4.6"/>
<circle cx="1039.2" cy="853.5" r="4.6"/>
<circle cx="979.7" cy="851.6" r="4.6"/>
<circle cx="1038.2" cy="868.5" r="4.6"/>
<circle cx="1025.3" cy="864.1" r="4.6"/>
<circle cx="1009.6" cy="850.5" r="4.6"/>
<circle cx="999.7" cy="859.5" r="4.6"/>
<circle cx="992.0" cy="851.4" r="4.6"/>
<circle cx="1075.5" cy="868.8" r="4.6"/>
<circle cx="1022.3" cy="867.6" r="4.6"/>
<circle cx="1013.3" cy="851.8" r="4.6"/>
<circle cx="1041.7" cy="877.2" r="4.6"/>
<circle cx="1003.9" cy="858.0" r="4.6"/>
<circle cx="1056.7" cy="870.1" r="4.6"/>
<circle cx="1023.1" cy="849.8" r="4.6"/>
<circle cx="990.5" cy="870.9" r="4.6"/>
<circle cx="998.9" cy="878.2" r="4.6"/>
<circle cx="1022.0" cy="849.1" r="4.6"/>
<circle cx="990.7" cy="857.8" r="4.6"/>
<circle cx="1041.5" cy="878.1" r="4.6"/>
<circle cx="981.8" cy="857.0" r="4.6"/>
<circle cx="989.5" cy="879.0" r="4.6"/>
<circle cx="971.9" cy="856.9" r="4.6"/>
<circle cx="1068.3" cy="875.6" r="4.6"/>
<circle cx="1049.3" cy="879.9" r="4.6"/>
<circle cx="986.3" cy="877.6" r="4.6"/>
<circle cx="1041.4" cy="856.4" r="4.6"/>
<circle cx="1008.0" cy="854.6" r="4.6"/>
<circle cx="997.2" cy="855.4" r="4.6"/>
<circle cx="1006.0" cy="873.2" r="4.6"/>
<circle cx="1007.9" cy="876.9" r="4.6"/>
<circle cx="987.2" cy="855.8" r="4.6"/>
<circle cx="1012.2" cy="872.8" r="4.6"/>
<circle cx="1050.9" cy="876.1" r="4.6"/>
<circle cx="1004.0" cy="852.3" r="4.6"/>
<circle cx="995.1" cy="869.2" r="4.6"/>
<circle cx="1001.4" cy="852.5" r="4.6"/>
<circle cx="1070.4" cy="866.1" r="4.6"/>
<circle cx="991.9" cy="860.1" r="4.6"/>
<circle cx="1075.0" cy="878.2" r="4.6"/>
<circle cx="1099.5460591551603" cy="782.0041872833235" r="4.6"/>
<circle cx="1107.7197523359894" cy="789.9738953749152" r="4.6"/>
<circle cx="1116.7123976795835" cy="794.7317569258423" r="4.6"/>
<circle cx="1119.2102732935862" cy="801.953952053288" r="4.6"/>
<circle cx="1111.2910210100445" cy="808.0912375197206" r="4.6"/>
<circle cx="1102.4290169249816" cy="810.3111992437018" r="4.6"/>
<circle cx="1094.278195126676" cy="814.4474337632606" r="4.6"/>
<circle cx="1089.128994482628" cy="817.3160594854321" r="4.6"/>
<circle cx="1080.7892471668627" cy="824.0115426826459" r="4.6"/>
<circle cx="1076.9892300488875" cy="798.2589321032032" r="4.6"/>
<circle cx="1084.1354548776653" cy="797.2103785736745" r="4.6"/>
<circle cx="1091.3030334162918" cy="797.9210230835246" r="4.6"/>
<circle cx="1105.5338985057242" cy="787.9512953183701" r="4.6"/>
<circle cx="1111.0595652647198" cy="791.336330390225" r="4.6"/>
<circle cx="1096.3856903142052" cy="811.993901073588" r="4.6"/>
<circle cx="1090.8390846840177" cy="817.7878524116633" r="4.6"/>
<circle cx="895.9" cy="862.5" r="4.6"/>
<circle cx="922.2" cy="870.2" r="4.6"/>
<circle cx="930.9" cy="875.4" r="4.6"/>
<circle cx="925.2" cy="853.6" r="4.6"/>
<circle cx="937.2" cy="858.8" r="4.6"/>
<circle cx="918.5" cy="861.2" r="4.6"/>
<circle cx="930.2" cy="856.0" r="4.6"/>
<circle cx="896.8" cy="857.4" r="4.6"/>
<circle cx="890.4" cy="876.5" r="4.6"/>
<circle cx="919.3" cy="859.8" r="4.6"/>
<circle cx="906.9" cy="879.8" r="4.6"/>
<circle cx="914.5" cy="856.9" r="4.6"/>
<circle cx="935.0" cy="869.6" r="4.6"/>
<circle cx="947.4" cy="853.1" r="4.6"/>
<circle cx="912.3" cy="874.6" r="4.6"/>
<circle cx="937.2" cy="877.4" r="4.6"/>
<circle cx="882.7" cy="858.8" r="4.6"/>
<circle cx="946.2" cy="867.5" r="4.6"/>
<circle cx="943.3" cy="861.2" r="4.6"/>
<circle cx="938.9" cy="863.5" r="4.6"/>
<circle cx="897.7" cy="873.3" r="4.6"/>
<circle cx="944.3" cy="853.2" r="4.6"/>
<circle cx="920.5" cy="868.6" r="4.6"/>
<circle cx="894.8" cy="861.1" r="4.6"/>
<circle cx="897.3" cy="868.0" r="4.6"/>
<circle cx="924.3" cy="856.1" r="4.6"/>
<circle cx="926.1" cy="855.6" r="4.6"/>
<circle cx="901.2" cy="856.1" r="4.6"/>
<circle cx="934.1" cy="866.4" r="4.6"/>
<circle cx="906.9" cy="866.5" r="4.6"/>
<circle cx="923.5" cy="852.7" r="4.6"/>
<circle cx="891.1" cy="870.9" r="4.6"/>
<circle cx="907.9" cy="858.5" r="4.6"/>
<circle cx="900.9" cy="878.6" r="4.6"/>
<circle cx="901.2" cy="867.0" r="4.6"/>
<circle cx="904.3" cy="862.5" r="4.6"/>
<circle cx="938.8" cy="879.9" r="4.6"/>
<circle cx="904.7" cy="855.9" r="4.6"/>
<circle cx="929.5" cy="856.1" r="4.6"/>
<circle cx="880.4" cy="877.0" r="4.6"/>
<circle cx="908.8" cy="874.6" r="4.6"/>
<circle cx="907.6" cy="876.5" r="4.6"/>
<circle cx="911.3" cy="854.9" r="4.6"/>
<circle cx="923.6" cy="877.3" r="4.6"/>
<circle cx="886.1" cy="868.7" r="4.6"/>
<circle cx="905.2" cy="865.1" r="4.6"/>
<circle cx="889.9" cy="858.5" r="4.6"/>
<circle cx="915.4" cy="877.8" r="4.6"/>
<circle cx="887.4" cy="864.7" r="4.6"/>
<circle cx="934.7" cy="879.0" r="4.6"/>
<circle cx="944.1" cy="879.3" r="4.6"/>
<circle cx="912.8" cy="851.6" r="4.6"/>
<circle cx="943.0" cy="861.6" r="4.6"/>
<circle cx="941.5" cy="868.6" r="4.6"/>
<circle cx="936.1" cy="854.8" r="4.6"/>
<circle cx="933.4" cy="856.7" r="4.6"/>
<circle cx="907.5" cy="875.4" r="4.6"/>
<circle cx="936.4" cy="855.5" r="4.6"/>
<circle cx="894.8" cy="862.0" r="4.6"/>
<circle cx="915.2" cy="861.5" r="4.6"/>
<circle cx="844.9" cy="871.0" r="4.6"/>
<circle cx="869.0" cy="878.8" r="4.6"/>
<circle cx="841.6" cy="874.7" r="4.6"/>
<circle cx="870.3" cy="868.5" r="4.6"/>
<circle cx="873.5" cy="869.4" r="4.6"/>
<circle cx="864.0" cy="874.6" r="4.6"/>
</g>
<rect x="0" y="290" width="1869" height="18" fill="url(#sh)"/>
</svg>
<div class="btn" style="left:15px;top:40px;width:202px;height:54px;background:#00c2b5"></div>
<svg class="abs" style="left:56px;top:61px" width="7" height="11" viewBox="0 0 7 11"><path d="M5.5 1 L1.5 5.5 L5.5 10" fill="none" stroke="#fff" stroke-width="1.3"/></svg>
<div class="bt" style="left:70px;top:60px;font-size:12.5px;color:#fff;font-weight:bold;letter-spacing:-0.2px">SHOW ON LIST</div>
<svg class="abs" style="left:167px;top:62px" width="11" height="10" viewBox="0 0 11 10"><path d="M0.5 1.5 H10.5 M0.5 5 H10.5 M0.5 8.5 H10.5" stroke="#fff" stroke-width="1.6"/></svg>
<div class="abs" style="left:1820px;top:10px;width:40px;height:81px;background:#fff;box-shadow:0 1px 3px rgba(0,0,0,0.25)"></div>
<div class="abs" style="left:1825px;top:50px;width:30px;height:1px;background:#e6e6e6"></div>
<svg class="abs" style="left:1830px;top:20px" width="20" height="60" viewBox="0 0 20 60"><path d="M2 10 H18 M10 2 V18" stroke="#666" stroke-width="2"/><path d="M2 51 H18" stroke="#666" stroke-width="2"/></svg>
<div class="abs" style="left:766px;top:269px;width:323px;height:46px;border-radius:22px;background:rgba(32,34,32,0.86)"></div>
<div class="abs" style="left:785px;top:283.5px;font-size:15px;color:#fff;letter-spacing:0.3px">Scroll in to explore properties in this area</div>
<div class="abs" style="left:1767px;top:515px;width:100px;height:90px;border-radius:13px;background:#3d4459"></div>
<svg class="abs" style="left:1775px;top:522px" width="86" height="38" viewBox="0 0 86 38"><path d="M13 1.5 H70 Q82 1.5 82 13 Q82 25 70 25 H70 V36 L60 25 H13 Q1.5 25 1.5 13 Q1.5 1.5 13 1.5 Z" fill="#ff9500" stroke="#fff" stroke-width="1.5"/><circle cx="33" cy="20" r="2.2" fill="#fff"/><circle cx="42" cy="20" r="2.2" fill="#fff"/><circle cx="51" cy="20" r="2.2" fill="#fff"/></svg>
<div class="abs" style="left:1776px;top:559px;font-size:19px;color:#fff;font-weight:bold;letter-spacing:-0.5px">Chat now</div>
</div>
</body></html>
